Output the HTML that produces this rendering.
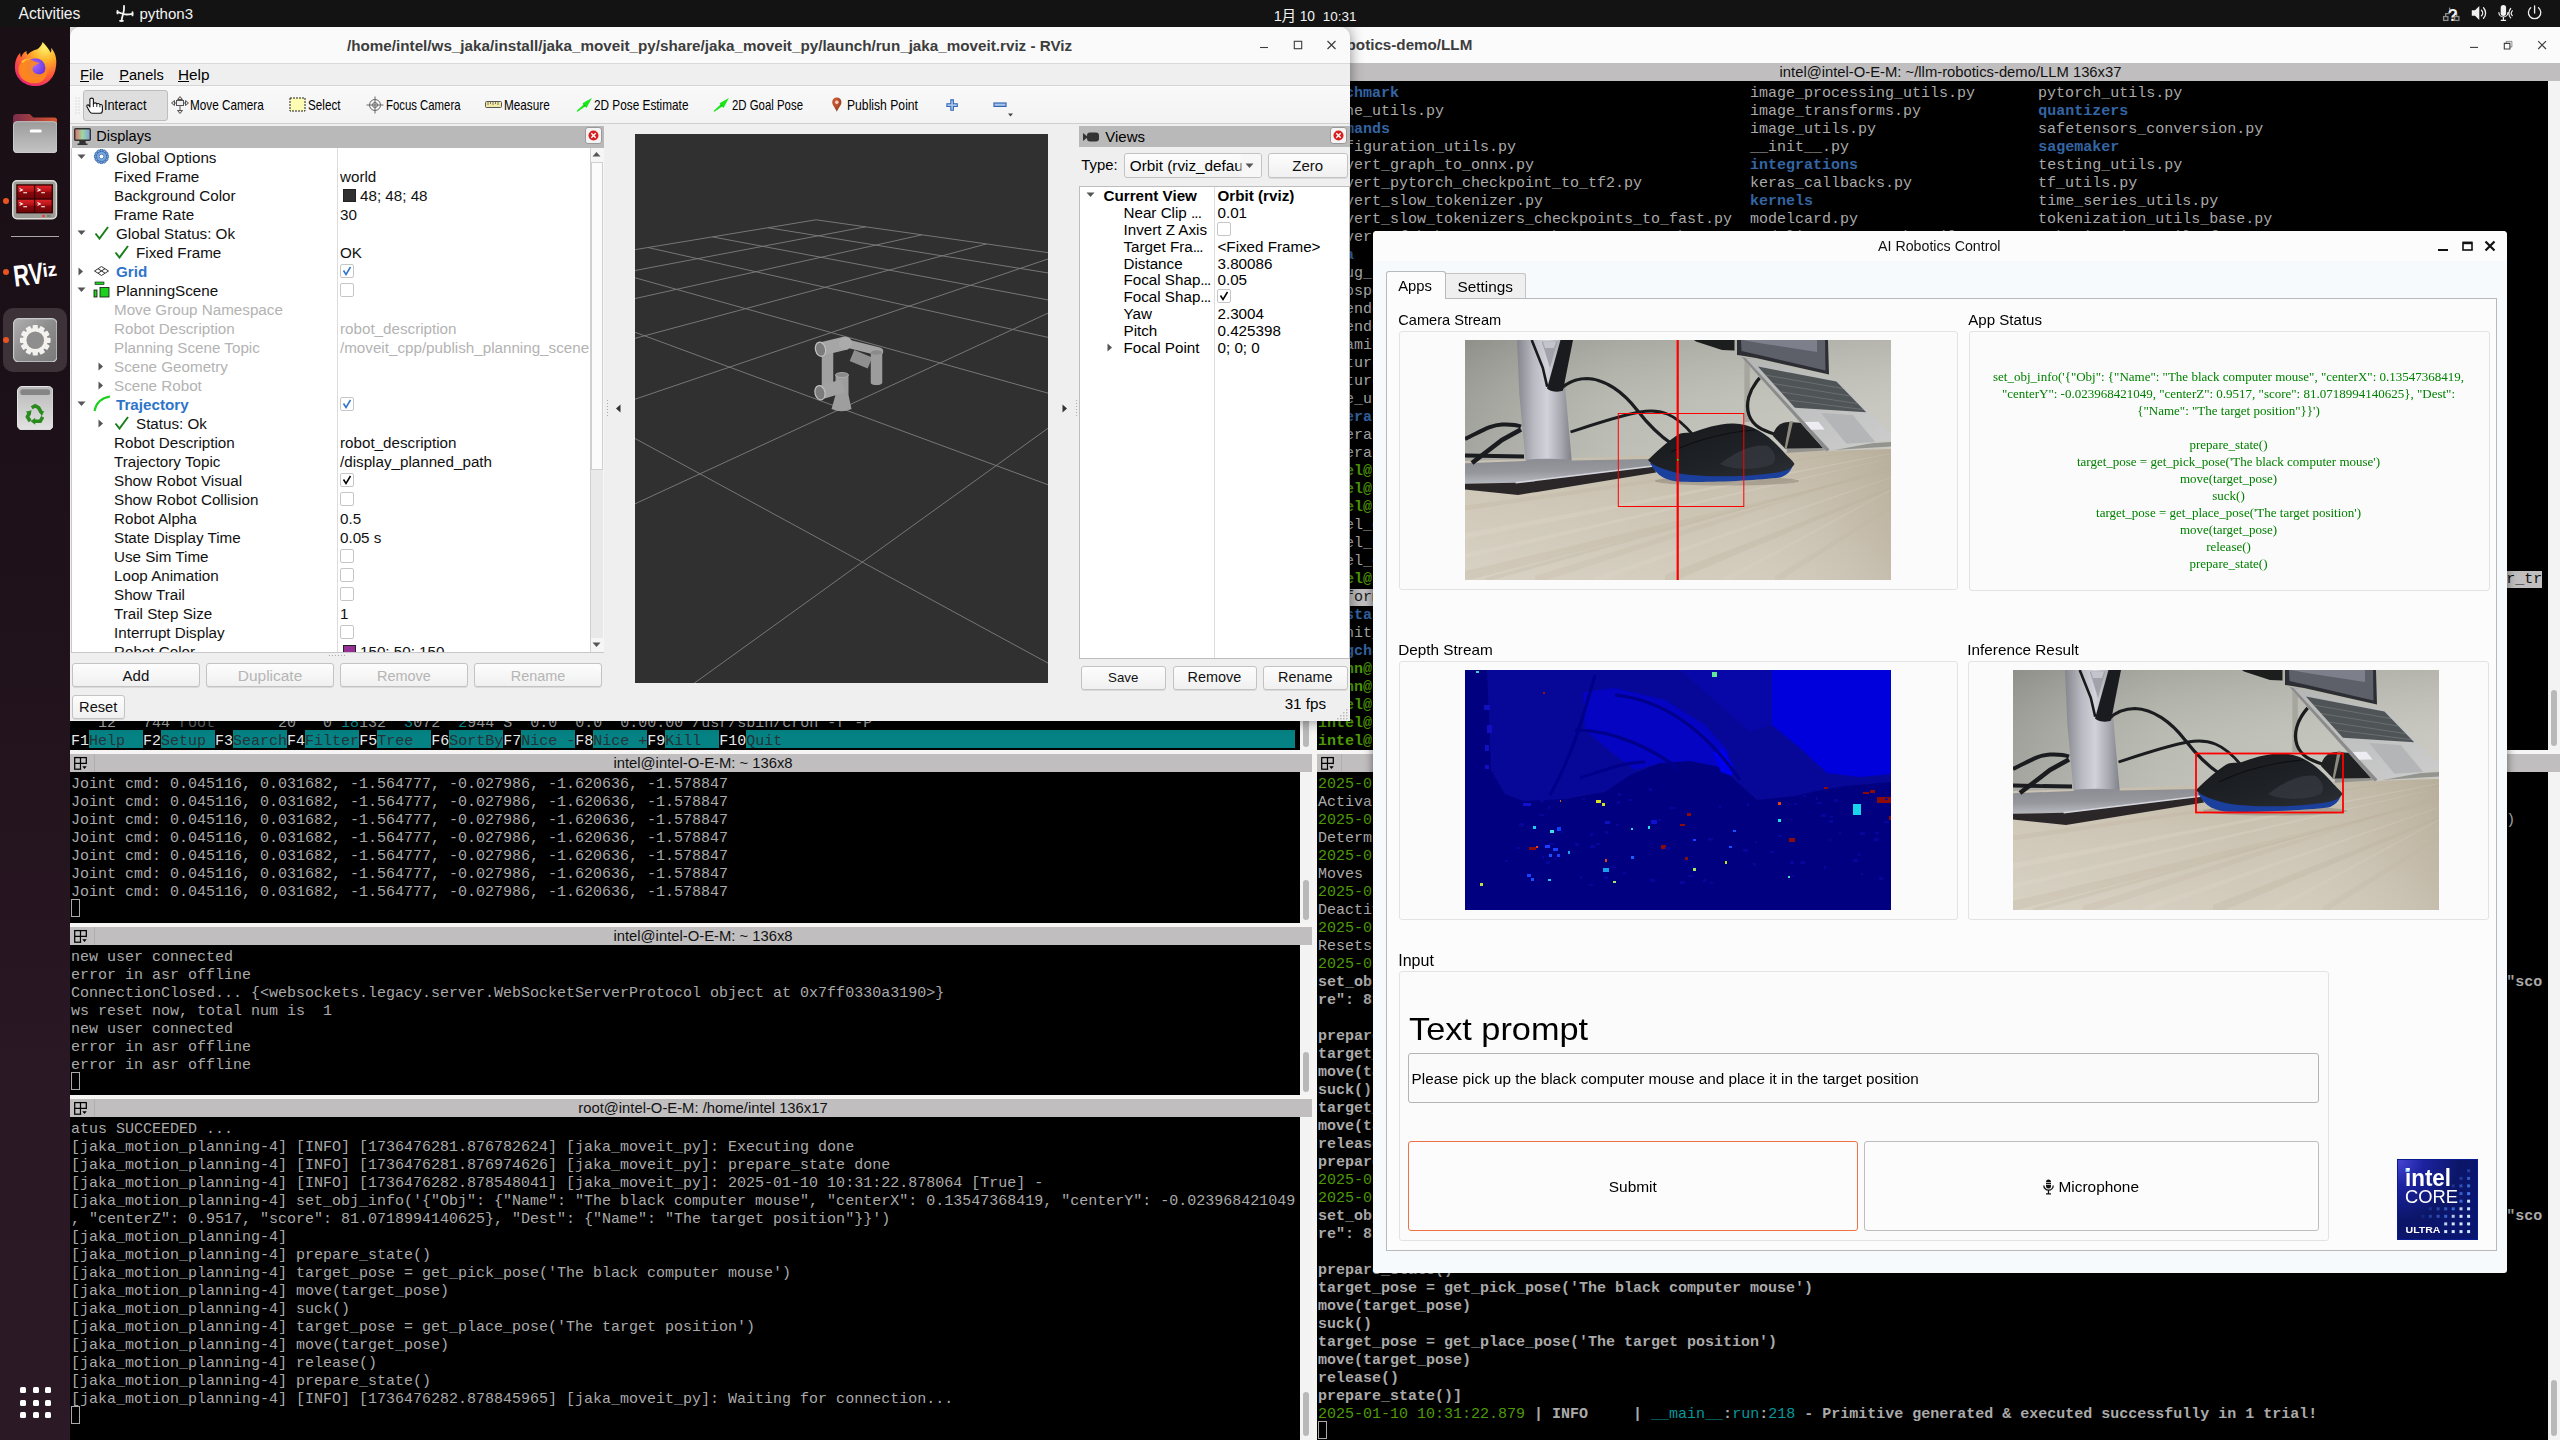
<!DOCTYPE html><html lang="en"><head><meta charset="utf-8"><title>desktop</title><style>

*{box-sizing:border-box;margin:0;padding:0}
html,body{width:2560px;height:1440px;overflow:hidden;background:#000}
body{position:relative;font-family:"Liberation Sans","Noto Sans CJK SC",sans-serif;font-size:15px;color:#000}
.abs{position:absolute}
.t{position:absolute;white-space:pre;line-height:1}
#topbar{position:absolute;left:0;top:0;width:2560px;height:27px;background:#131313;color:#f2f2f2}
#dock{position:absolute;left:0;top:27px;width:70px;height:1413px;background:linear-gradient(180deg,#1b0f16 0%,#1c1018 25%,#22131c 50%,#2a1824 75%,#2b1925 100%)}
.mono{font-family:"Liberation Mono","DejaVu Sans Mono",monospace;font-size:15px;line-height:18px;white-space:pre;color:#aaaaaa;letter-spacing:0px}
.term{position:absolute;background:#000;overflow:hidden}
.term .ln{position:absolute;left:0;height:18px;white-space:pre}
.ptitle{position:absolute;background:#c0bebf;height:18px;font-size:14.8px;color:#111;text-align:center;line-height:18px}
.b{font-weight:bold}

</style></head><body>
<div class="abs" style="left:70px;top:27px;width:2490px;height:1413px;background:#f6f5f4"></div>
<div class="abs" style="left:70px;top:27px;width:2490px;height:36px;background:#fbfbfb"></div>
<span class="t b" style="left:1155px;top:37px;font-size:15.2px;color:#3d3d3d">intel@intel-O-E-M: ~/llm-robotics-demo/LLM</span>
<svg class="abs" style="left:2460px;top:35px" width="96" height="22" viewBox="0 0 96 22"><g fill="none" stroke="#3d3d3d" stroke-width="1.100"><path d="M10 12.400h8"/><path d="M44.300 8.400h5.600v5.600h-5.600z" stroke-width="1.100"/><path d="M46.300 8.400v-2h5.600v5.600h-2" stroke-width="0.800" opacity="0.700"/><path d="M78.200 6.200l7.800 7.800M86 6.200l-7.800 7.800" stroke-width="1.200"/></g></svg>
<div class="ptitle" style="left:70px;top:63px;width:1242px;padding-left:24px">intel@intel-O-E-M: ~ 136x37<svg class="abs" style="left:2px;top:0" width="24" height="18" viewBox="0 0 24 18"><g fill="none" stroke="#000" stroke-width="1.250"><rect x="2.700" y="3.600" width="11.600" height="11.600"/><path d="M8.500 3.600v11.600M2.700 9.400h11.600"/></g><rect x="9.200" y="10.100" width="6" height="6" fill="#c0bebf"/><path d="M10.300 12.300h4.400l-2.200 2.600z" fill="#000"/><path d="M22.500 0v18" stroke="#b0aeaf" stroke-width="1"/></svg></div>
<div class="term mono" style="left:70px;top:81px;width:1230px;height:669px">
<div class="abs" style="left:19px;top:649px;width:54px;height:18px;background:#058384"></div><div class="abs" style="left:91px;top:649px;width:54px;height:18px;background:#058384"></div><div class="abs" style="left:163px;top:649px;width:54px;height:18px;background:#058384"></div><div class="abs" style="left:235px;top:649px;width:54px;height:18px;background:#058384"></div><div class="abs" style="left:307px;top:649px;width:54px;height:18px;background:#058384"></div><div class="abs" style="left:379px;top:649px;width:54px;height:18px;background:#058384"></div><div class="abs" style="left:451px;top:649px;width:54px;height:18px;background:#058384"></div><div class="abs" style="left:523px;top:649px;width:54px;height:18px;background:#058384"></div><div class="abs" style="left:595px;top:649px;width:54px;height:18px;background:#058384"></div><div class="abs" style="left:676px;top:649px;width:549px;height:18px;background:#058384"></div>
<div class="ln" style="top:634px;left:1px">   12   744 <span style="color:#666">root</span>       20   0 <span style="color:#06989a">18</span>132  <span style="color:#06989a">3</span>072  <span style="color:#06989a">2</span>944 S  0.0  0.0  0:00.00 /usr/sbin/cron -f -P</div>
<div class="ln" style="top:652px;left:1px"><span style="color:#e8e8e8">F1</span><span style="color:#26343a">Help  </span><span style="color:#e8e8e8">F2</span><span style="color:#26343a">Setup </span><span style="color:#e8e8e8">F3</span><span style="color:#26343a">Search</span><span style="color:#e8e8e8">F4</span><span style="color:#26343a">Filter</span><span style="color:#e8e8e8">F5</span><span style="color:#26343a">Tree  </span><span style="color:#e8e8e8">F6</span><span style="color:#26343a">SortBy</span><span style="color:#e8e8e8">F7</span><span style="color:#26343a">Nice -</span><span style="color:#e8e8e8">F8</span><span style="color:#26343a">Nice +</span><span style="color:#e8e8e8">F9</span><span style="color:#26343a">Kill  </span><span style="color:#e8e8e8">F10</span><span style="color:#26343a">Quit                                                       </span></div>

</div>
<div class="ptitle" style="left:70px;top:754px;width:1242px;padding-left:24px">intel@intel-O-E-M: ~ 136x8<svg class="abs" style="left:2px;top:0" width="24" height="18" viewBox="0 0 24 18"><g fill="none" stroke="#000" stroke-width="1.250"><rect x="2.700" y="3.600" width="11.600" height="11.600"/><path d="M8.500 3.600v11.600M2.700 9.400h11.600"/></g><rect x="9.200" y="10.100" width="6" height="6" fill="#c0bebf"/><path d="M10.300 12.300h4.400l-2.200 2.600z" fill="#000"/><path d="M22.500 0v18" stroke="#b0aeaf" stroke-width="1"/></svg></div>
<div class="term mono" style="left:70px;top:772px;width:1230px;height:151px">

<div class="ln" style="top:4px;left:1px">Joint cmd: 0.045116, 0.031682, -1.564777, -0.027986, -1.620636, -1.578847</div>
<div class="ln" style="top:22px;left:1px">Joint cmd: 0.045116, 0.031682, -1.564777, -0.027986, -1.620636, -1.578847</div>
<div class="ln" style="top:40px;left:1px">Joint cmd: 0.045116, 0.031682, -1.564777, -0.027986, -1.620636, -1.578847</div>
<div class="ln" style="top:58px;left:1px">Joint cmd: 0.045116, 0.031682, -1.564777, -0.027986, -1.620636, -1.578847</div>
<div class="ln" style="top:76px;left:1px">Joint cmd: 0.045116, 0.031682, -1.564777, -0.027986, -1.620636, -1.578847</div>
<div class="ln" style="top:94px;left:1px">Joint cmd: 0.045116, 0.031682, -1.564777, -0.027986, -1.620636, -1.578847</div>
<div class="ln" style="top:112px;left:1px">Joint cmd: 0.045116, 0.031682, -1.564777, -0.027986, -1.620636, -1.578847</div>
<div class="abs" style="left:1px;top:127px;width:9px;height:18px;border:1px solid #aaaaaa"></div>
</div>
<div class="ptitle" style="left:70px;top:927px;width:1242px;padding-left:24px">intel@intel-O-E-M: ~ 136x8<svg class="abs" style="left:2px;top:0" width="24" height="18" viewBox="0 0 24 18"><g fill="none" stroke="#000" stroke-width="1.250"><rect x="2.700" y="3.600" width="11.600" height="11.600"/><path d="M8.500 3.600v11.600M2.700 9.400h11.600"/></g><rect x="9.200" y="10.100" width="6" height="6" fill="#c0bebf"/><path d="M10.300 12.300h4.400l-2.200 2.600z" fill="#000"/><path d="M22.500 0v18" stroke="#b0aeaf" stroke-width="1"/></svg></div>
<div class="term mono" style="left:70px;top:945px;width:1230px;height:150px">

<div class="ln" style="top:4px;left:1px">new user connected</div>
<div class="ln" style="top:22px;left:1px">error in asr offline</div>
<div class="ln" style="top:40px;left:1px">ConnectionClosed... {&lt;websockets.legacy.server.WebSocketServerProtocol object at 0x7ff0330a3190&gt;}</div>
<div class="ln" style="top:58px;left:1px">ws reset now, total num is  1</div>
<div class="ln" style="top:76px;left:1px">new user connected</div>
<div class="ln" style="top:94px;left:1px">error in asr offline</div>
<div class="ln" style="top:112px;left:1px">error in asr offline</div>
<div class="abs" style="left:1px;top:127px;width:9px;height:18px;border:1px solid #aaaaaa"></div>
</div>
<div class="ptitle" style="left:70px;top:1099px;width:1242px;padding-left:24px">root@intel-O-E-M: /home/intel 136x17<svg class="abs" style="left:2px;top:0" width="24" height="18" viewBox="0 0 24 18"><g fill="none" stroke="#000" stroke-width="1.250"><rect x="2.700" y="3.600" width="11.600" height="11.600"/><path d="M8.500 3.600v11.600M2.700 9.400h11.600"/></g><rect x="9.200" y="10.100" width="6" height="6" fill="#c0bebf"/><path d="M10.300 12.300h4.400l-2.200 2.600z" fill="#000"/><path d="M22.500 0v18" stroke="#b0aeaf" stroke-width="1"/></svg></div>
<div class="term mono" style="left:70px;top:1117px;width:1230px;height:323px">

<div class="ln" style="top:4px;left:1px">atus SUCCEEDED ...</div>
<div class="ln" style="top:22px;left:1px">[jaka_motion_planning-4] [INFO] [1736476281.876782624] [jaka_moveit_py]: Executing done</div>
<div class="ln" style="top:40px;left:1px">[jaka_motion_planning-4] [INFO] [1736476281.876974626] [jaka_moveit_py]: prepare_state done</div>
<div class="ln" style="top:58px;left:1px">[jaka_motion_planning-4] [INFO] [1736476282.878548041] [jaka_moveit_py]: 2025-01-10 10:31:22.878064 [True] -</div>
<div class="ln" style="top:76px;left:1px">[jaka_motion_planning-4] set_obj_info('{"Obj": {"Name": "The black computer mouse", "centerX": 0.13547368419, "centerY": -0.023968421049</div>
<div class="ln" style="top:94px;left:1px">, "centerZ": 0.9517, "score": 81.0718994140625}, "Dest": {"Name": "The target position"}}')</div>
<div class="ln" style="top:112px;left:1px">[jaka_motion_planning-4]</div>
<div class="ln" style="top:130px;left:1px">[jaka_motion_planning-4] prepare_state()</div>
<div class="ln" style="top:148px;left:1px">[jaka_motion_planning-4] target_pose = get_pick_pose('The black computer mouse')</div>
<div class="ln" style="top:166px;left:1px">[jaka_motion_planning-4] move(target_pose)</div>
<div class="ln" style="top:184px;left:1px">[jaka_motion_planning-4] suck()</div>
<div class="ln" style="top:202px;left:1px">[jaka_motion_planning-4] target_pose = get_place_pose('The target position')</div>
<div class="ln" style="top:220px;left:1px">[jaka_motion_planning-4] move(target_pose)</div>
<div class="ln" style="top:238px;left:1px">[jaka_motion_planning-4] release()</div>
<div class="ln" style="top:256px;left:1px">[jaka_motion_planning-4] prepare_state()</div>
<div class="ln" style="top:274px;left:1px">[jaka_motion_planning-4] [INFO] [1736476282.878845965] [jaka_moveit_py]: Waiting for connection...</div>
<div class="abs" style="left:1px;top:289px;width:9px;height:18px;border:1px solid #aaaaaa"></div>
</div>
<div class="abs" style="left:1300px;top:81px;width:12px;height:669px;background:#f3f3f3"></div>
<div class="abs" style="left:1303px;top:700px;width:6px;height:47px;border-radius:3px;background:#b9b9b9"></div>
<div class="abs" style="left:1300px;top:772px;width:12px;height:151px;background:#f3f3f3"></div>
<div class="abs" style="left:1303px;top:880px;width:6px;height:40px;border-radius:3px;background:#b9b9b9"></div>
<div class="abs" style="left:1300px;top:945px;width:12px;height:150px;background:#f3f3f3"></div>
<div class="abs" style="left:1303px;top:1052px;width:6px;height:40px;border-radius:3px;background:#b9b9b9"></div>
<div class="abs" style="left:1300px;top:1117px;width:12px;height:323px;background:#f3f3f3"></div>
<div class="abs" style="left:1303px;top:1392px;width:6px;height:44px;border-radius:3px;background:#b9b9b9"></div>
<div class="ptitle" style="left:1317px;top:63px;width:1243px;padding-left:24px">intel@intel-O-E-M: ~/llm-robotics-demo/LLM 136x37<svg class="abs" style="left:2px;top:0" width="24" height="18" viewBox="0 0 24 18"><g fill="none" stroke="#000" stroke-width="1.250"><rect x="2.700" y="3.600" width="11.600" height="11.600"/><path d="M8.500 3.600v11.600M2.700 9.400h11.600"/></g><rect x="9.200" y="10.100" width="6" height="6" fill="#c0bebf"/><path d="M10.300 12.300h4.400l-2.200 2.600z" fill="#000"/><path d="M22.500 0v18" stroke="#b0aeaf" stroke-width="1"/></svg></div>
<div class="term mono" style="left:1317px;top:81px;width:1231px;height:669px">

<div class="ln" style="top:4px;left:1px"><span style="color:#3465a4;font-weight:bold">benchmark</span>                                       image_processing_utils.py       pytorch_utils.py</div>
<div class="ln" style="top:22px;left:1px">cache_utils.py                                  image_transforms.py             <span style="color:#3465a4;font-weight:bold">quantizers</span></div>
<div class="ln" style="top:40px;left:1px"><span style="color:#3465a4;font-weight:bold">commands</span>                                        image_utils.py                  safetensors_conversion.py</div>
<div class="ln" style="top:58px;left:1px">configuration_utils.py                          __init__.py                     <span style="color:#3465a4;font-weight:bold">sagemaker</span></div>
<div class="ln" style="top:76px;left:1px">convert_graph_to_onnx.py                        <span style="color:#3465a4;font-weight:bold">integrations</span>                    testing_utils.py</div>
<div class="ln" style="top:94px;left:1px">convert_pytorch_checkpoint_to_tf2.py            keras_callbacks.py              tf_utils.py</div>
<div class="ln" style="top:112px;left:1px">convert_slow_tokenizer.py                       <span style="color:#3465a4;font-weight:bold">kernels</span>                         time_series_utils.py</div>
<div class="ln" style="top:130px;left:1px">convert_slow_tokenizers_checkpoints_to_fast.py  modelcard.py                    tokenization_utils_base.py</div>
<div class="ln" style="top:148px;left:1px">convert_tf_hub_seq_to_seq_bert_to_pytorch.py    modeling_attn_mask_utils.py     tokenization_utils_fast.py</div>
<div class="ln" style="top:166px;left:1px"><span style="color:#3465a4;font-weight:bold">data</span></div>
<div class="ln" style="top:184px;left:1px">debug_utils.py</div>
<div class="ln" style="top:202px;left:1px">deepspeed.py</div>
<div class="ln" style="top:220px;left:1px">dependency_versions_check.py</div>
<div class="ln" style="top:238px;left:1px">dependency_versions_table.py</div>
<div class="ln" style="top:256px;left:1px">dynamic_module_utils.py</div>
<div class="ln" style="top:274px;left:1px">feature_extraction_sequence_utils.py</div>
<div class="ln" style="top:292px;left:1px">feature_extraction_utils.py</div>
<div class="ln" style="top:310px;left:1px">file_utils.py</div>
<div class="ln" style="top:328px;left:1px"><span style="color:#3465a4;font-weight:bold">generation</span></div>
<div class="ln" style="top:346px;left:1px">generation_flax_utils.py</div>
<div class="ln" style="top:364px;left:1px">generation_tf_utils.py</div>
<div class="ln" style="top:382px;left:1px"><span style="color:#4e9a06;font-weight:bold">intel@intel-O-E-M</span>:<span style="color:#3465a4;font-weight:bold">~/llm-robotics-demo/LLM</span>$ </div>
<div class="ln" style="top:400px;left:1px"><span style="color:#4e9a06;font-weight:bold">intel@intel-O-E-M</span>:<span style="color:#3465a4;font-weight:bold">~/llm-robotics-demo/LLM</span>$ </div>
<div class="ln" style="top:418px;left:1px"><span style="color:#4e9a06;font-weight:bold">intel@intel-O-E-M</span>:<span style="color:#3465a4;font-weight:bold">~/llm-robotics-demo/LLM</span>$ </div>
<div class="ln" style="top:436px;left:1px">intel_<span style="color:#3465a4;font-weight:bold">extension_for_transformers</span></div>
<div class="ln" style="top:454px;left:1px">intel_<span style="color:#3465a4;font-weight:bold">npu_acceleration_library</span></div>
<div class="ln" style="top:472px;left:1px">intel_<span style="color:#3465a4;font-weight:bold">openvino_notebooks</span></div>
<div class="ln" style="top:490px;left:1px"><span style="color:#4e9a06;font-weight:bold">intel@intel-O-E-M</span>:<span style="color:#3465a4;font-weight:bold">~/llm-robotics-demo/LLM</span>$ ls ../ | grep perf</div>
<div class="ln" style="top:508px;left:1px"><span style="background:#c0bebf;color:#1a1a1a">performance_hint</span></div>
<div class="ln" style="top:526px;left:1px"><span style="color:#3465a4;font-weight:bold">lm-starter-kit</span></div>
<div class="ln" style="top:544px;left:1px">__init__.py</div>
<div class="ln" style="top:562px;left:1px"><span style="color:#3465a4;font-weight:bold">langchain_demo</span></div>
<div class="ln" style="top:580px;left:1px"><span style="color:#4e9a06;font-weight:bold">adlnn@intel-O-E-M</span>:</div>
<div class="ln" style="top:598px;left:1px"><span style="color:#4e9a06;font-weight:bold">adlnn@intel-O-E-M</span>:</div>
<div class="ln" style="top:616px;left:1px"><span style="color:#4e9a06;font-weight:bold">intel@intel-O-E-M</span>:<span style="color:#3465a4;font-weight:bold">~/llm-robotics-demo/LLM</span>$ </div>
<div class="ln" style="top:634px;left:1px"><span style="color:#4e9a06;font-weight:bold">intel@intel-O-E-M</span>:<span style="color:#3465a4;font-weight:bold">~/llm-robotics-demo/LLM</span>$ </div>
<div class="ln" style="top:652px;left:1px"><span style="color:#4e9a06;font-weight:bold">intel@intel-O-E-M</span>:<span style="color:#3465a4;font-weight:bold">~/llm-robotics-demo/LLM</span>$ </div>
<div class="ln" style="top:490px;left:1px">                                                                                                                                    <span style="background:#c0bebf;color:#111">r_tr</span></div>

</div>
<div class="ptitle" style="left:1317px;top:754px;width:1243px;padding-left:24px">intel@intel-O-E-M: ~/llm-robotics-demo/LLM 136x37<svg class="abs" style="left:2px;top:0" width="24" height="18" viewBox="0 0 24 18"><g fill="none" stroke="#000" stroke-width="1.250"><rect x="2.700" y="3.600" width="11.600" height="11.600"/><path d="M8.500 3.600v11.600M2.700 9.400h11.600"/></g><rect x="9.200" y="10.100" width="6" height="6" fill="#c0bebf"/><path d="M10.300 12.300h4.400l-2.200 2.600z" fill="#000"/><path d="M22.500 0v18" stroke="#b0aeaf" stroke-width="1"/></svg></div>
<div class="term mono" style="left:1317px;top:772px;width:1231px;height:668px">

<div class="ln" style="top:4px;left:1px"><span style="color:#4e9a06">2025-01-10 10:31:12.1</span></div>
<div class="ln" style="top:22px;left:1px">Activates the gripper</div>
<div class="ln" style="top:40px;left:1px"><span style="color:#4e9a06">2025-01-10 10:31:14.2</span>                                                                                                               )</div>
<div class="ln" style="top:58px;left:1px">Determines the pose</div>
<div class="ln" style="top:76px;left:1px"><span style="color:#4e9a06">2025-01-10 10:31:16.3</span></div>
<div class="ln" style="top:94px;left:1px">Moves  the arm</div>
<div class="ln" style="top:112px;left:1px"><span style="color:#4e9a06">2025-01-10 10:31:18.4</span></div>
<div class="ln" style="top:130px;left:1px">Deactivates</div>
<div class="ln" style="top:148px;left:1px"><span style="color:#4e9a06">2025-01-10 10:31:19.5</span></div>
<div class="ln" style="top:166px;left:1px">Resets the state</div>
<div class="ln" style="top:184px;left:1px"><span style="color:#4e9a06">2025-01-10 10:31:20.6</span></div>
<div class="ln" style="top:202px;left:1px"><span style="font-weight:bold;color:#aaaaaa">set_obj_info('{"Obj": {"Name": "The black computer mouse"                                                                           "sco</span></div>
<div class="ln" style="top:220px;left:1px"><span style="font-weight:bold;color:#aaaaaa">re": 81.0718994140625}</span></div>
<div class="ln" style="top:256px;left:1px"><span style="font-weight:bold;color:#aaaaaa">prepare_state()</span></div>
<div class="ln" style="top:274px;left:1px"><span style="font-weight:bold;color:#aaaaaa">target_pose</span></div>
<div class="ln" style="top:292px;left:1px"><span style="font-weight:bold;color:#aaaaaa">move(target_pose)</span></div>
<div class="ln" style="top:310px;left:1px"><span style="font-weight:bold;color:#aaaaaa">suck()</span></div>
<div class="ln" style="top:328px;left:1px"><span style="font-weight:bold;color:#aaaaaa">target_pose</span></div>
<div class="ln" style="top:346px;left:1px"><span style="font-weight:bold;color:#aaaaaa">move(target_pose)</span></div>
<div class="ln" style="top:364px;left:1px"><span style="font-weight:bold;color:#aaaaaa">release()</span></div>
<div class="ln" style="top:382px;left:1px"><span style="font-weight:bold;color:#aaaaaa">prepare_state()</span></div>
<div class="ln" style="top:400px;left:1px"><span style="color:#4e9a06">2025-01-10 10:31:21.7</span></div>
<div class="ln" style="top:418px;left:1px"><span style="color:#4e9a06">2025-01-10 10:31:22.8</span></div>
<div class="ln" style="top:436px;left:1px"><span style="font-weight:bold;color:#aaaaaa">set_obj_info('{"Obj": {"Name": "The black computer mouse"                                                                           "sco</span></div>
<div class="ln" style="top:454px;left:1px"><span style="font-weight:bold;color:#aaaaaa">re": 81.0718994140625}</span></div>
<div class="ln" style="top:490px;left:1px"><span style="font-weight:bold;color:#aaaaaa">prepare_state()</span></div>
<div class="ln" style="top:508px;left:1px"><span style="font-weight:bold;color:#aaaaaa">target_pose = get_pick_pose('The black computer mouse')</span></div>
<div class="ln" style="top:526px;left:1px"><span style="font-weight:bold;color:#aaaaaa">move(target_pose)</span></div>
<div class="ln" style="top:544px;left:1px"><span style="font-weight:bold;color:#aaaaaa">suck()</span></div>
<div class="ln" style="top:562px;left:1px"><span style="font-weight:bold;color:#aaaaaa">target_pose = get_place_pose('The target position')</span></div>
<div class="ln" style="top:580px;left:1px"><span style="font-weight:bold;color:#aaaaaa">move(target_pose)</span></div>
<div class="ln" style="top:598px;left:1px"><span style="font-weight:bold;color:#aaaaaa">release()</span></div>
<div class="ln" style="top:616px;left:1px"><span style="font-weight:bold;color:#aaaaaa">prepare_state()]</span></div>
<div class="ln" style="top:634px;left:1px"><span style="color:#4e9a06">2025-01-10 10:31:22.879</span><span style="color:#aaaaaa;font-weight:bold"> | </span><span style="color:#aaaaaa;font-weight:bold">INFO    </span><span style="color:#aaaaaa;font-weight:bold"> | </span><span style="color:#06989a">__main__</span><span style="color:#aaaaaa;font-weight:bold">:</span><span style="color:#06989a">run</span><span style="color:#aaaaaa;font-weight:bold">:</span><span style="color:#06989a">218</span><span style="color:#aaaaaa;font-weight:bold"> - </span><span style="color:#aaaaaa;font-weight:bold">Primitive generated &amp; executed successfully in 1 trial!</span></div>
<div class="abs" style="left:1px;top:649px;width:9px;height:18px;border:1px solid #aaaaaa"></div>
</div>
<div class="abs" style="left:2548px;top:81px;width:12px;height:669px;background:#f3f3f3"></div>
<div class="abs" style="left:2551px;top:690px;width:6px;height:56px;border-radius:3px;background:#b9b9b9"></div>
<div class="abs" style="left:2548px;top:772px;width:12px;height:668px;background:#f3f3f3"></div>
<div class="abs" style="left:2551px;top:1380px;width:6px;height:56px;border-radius:3px;background:#b9b9b9"></div>
<div class="abs" style="left:70px;top:27px;width:1280px;height:694px;background:#efefef;border-radius:10px 10px 0 0;box-shadow:0 0 14px rgba(0,0,0,0.45)"></div>
<div class="abs" style="left:70px;top:27px;width:1280px;height:37px;background:#fafafa;border-radius:10px 10px 0 0;border-bottom:1px solid #d9d9d9"></div>
<span class="t" style="left:347.00px;top:38.32px;font-size:15.22px;font-weight:bold;color:#3d3d3d;">/home/intel/ws_jaka/install/jaka_moveit_py/share/jaka_moveit_py/launch/run_jaka_moveit.rviz - RViz</span>
<svg class="abs" style="left:1250px;top:34px" width="96" height="22" viewBox="0 0 96 22"><g fill="none" stroke="#3d3d3d" stroke-width="1.100"><path d="M10 13.500h8"/><rect x="44.300" y="7.300" width="7.400" height="7.400"/><path d="M77.500 7l8 8M85.500 7l-8 8" stroke-width="1.200"/></g></svg>
<div class="abs" style="left:70px;top:64px;width:1280px;height:22px;background:#efefef;border-bottom:1px solid #d6d6d6"></div>
<span class="t" style="left:80.00px;top:67.52px;font-size:14.74px;"><u>F</u>ile</span>
<span class="t" style="left:119.25px;top:67.68px;font-size:14.55px;"><u>P</u>anels</span>
<span class="t" style="left:178.00px;top:67.03px;font-size:15.32px;"><u>H</u>elp</span>
<div class="abs" style="left:70px;top:86px;width:1280px;height:38px;background:linear-gradient(180deg,#f9f9f9,#f3f3f3);border-bottom:1px solid #cfcfcf"></div>
<svg class="abs" style="left:74.500px;top:96.500px" width="5" height="17" viewBox="0 0 5 17"><g fill="#c4c4c4"><rect x="0.5" y="0.5" width="1" height="1"/><rect x="0.5" y="3.5" width="1" height="1"/><rect x="0.5" y="6.5" width="1" height="1"/><rect x="0.5" y="9.5" width="1" height="1"/><rect x="0.5" y="12.5" width="1" height="1"/><rect x="0.5" y="15.5" width="1" height="1"/><rect x="3.5" y="0.5" width="1" height="1"/><rect x="3.5" y="3.5" width="1" height="1"/><rect x="3.5" y="6.5" width="1" height="1"/><rect x="3.5" y="9.5" width="1" height="1"/><rect x="3.5" y="12.5" width="1" height="1"/><rect x="3.5" y="15.5" width="1" height="1"/></g></svg>
<div class="abs" style="left:83px;top:90px;width:85px;height:31px;border:1px solid #bdbdbd;border-radius:3px;background:#dedede"></div>
<span class="t" style="left:103.75px;top:97.64px;font-size:14.60px;transform:scaleX(0.8729);transform-origin:0 0;">Interact</span>
<span class="t" style="left:190.00px;top:97.64px;font-size:14.60px;transform:scaleX(0.8044);transform-origin:0 0;">Move Camera</span>
<span class="t" style="left:308.00px;top:97.64px;font-size:14.60px;transform:scaleX(0.8010);transform-origin:0 0;">Select</span>
<span class="t" style="left:386.25px;top:97.64px;font-size:14.60px;transform:scaleX(0.7782);transform-origin:0 0;">Focus Camera</span>
<span class="t" style="left:504.25px;top:97.64px;font-size:14.60px;transform:scaleX(0.8055);transform-origin:0 0;">Measure</span>
<span class="t" style="left:594.00px;top:97.64px;font-size:14.60px;transform:scaleX(0.8088);transform-origin:0 0;">2D Pose Estimate</span>
<span class="t" style="left:732.00px;top:97.64px;font-size:14.60px;transform:scaleX(0.7812);transform-origin:0 0;">2D Goal Pose</span>
<span class="t" style="left:847.00px;top:97.64px;font-size:14.60px;transform:scaleX(0.8332);transform-origin:0 0;">Publish Point</span>
<svg class="abs" style="left:85.800px;top:96.800px" width="17" height="17" viewBox="-0.500 -0.500 17 17"><path d="M3.400 9.500V1.700C3.400 0.300 6.900 0.300 6.900 1.700V6.500C6.900 5 10.300 5 10.300 6.800C10.300 5.600 13.400 5.800 13.400 7.500C13.400 6.600 15.900 6.800 15.900 8.500V13C15.900 15 15 15.800 13.500 15.800H5.500C4 15.800 3.300 14.500 2.500 13L0.400 9C-0.300 7.500 1.800 6.800 2.600 8.200z" fill="#fff" stroke="#111" stroke-width="1.100" stroke-linejoin="round"/><path d="M6.900 6.500v3M10.300 7v2.500M13.400 7.800v2" stroke="#111" stroke-width="0.900"/></svg>
<svg class="abs" style="left:171px;top:96px" width="18" height="18" viewBox="0 0 18 18"><g fill="none" stroke="#555" stroke-width="1"><path d="M9 1v16M1 7h16"/><path d="M9 0.500l-2.500 3h5zM9 17.500l-2.500-3h5zM0.500 7l3-2.500v5zM17.500 7l-3-2.500v5z" fill="#ddd"/><rect x="5.500" y="4.500" width="7" height="5" fill="#eee"/></g></svg>
<svg class="abs" style="left:289px;top:97px" width="17" height="15" viewBox="0 0 17 15"><rect x="1" y="1" width="15" height="13" fill="#fdfbb4" stroke="#222" stroke-width="1" stroke-dasharray="2 1"/></svg>
<svg class="abs" style="left:366px;top:96px" width="18" height="18" viewBox="0 0 18 18"><g fill="none" stroke="#666" stroke-width="1"><circle cx="9" cy="9" r="5.500"/><circle cx="9" cy="9" r="2.500"/><path d="M9 0.500v17M0.500 9h17"/></g></svg>
<svg class="abs" style="left:485px;top:101px" width="17" height="8" viewBox="0 0 17 8"><rect x="0.500" y="0.500" width="16" height="6" rx="1" fill="#f3e9a6" stroke="#555"/><path d="M3 1v3M5.500 1v2M8 1v3M10.500 1v2M13 1v3" stroke="#555" stroke-width="0.800"/></svg>
<svg class="abs" style="left:576px;top:97px" width="17" height="16" viewBox="0 0 17 16"><path d="M0.500 13.900L7.600 7.600L6.500 6.300L15.900 1.100L10.500 10.900L9.200 9.400L1.500 14.800z" fill="#1ae61a"/><path d="M7.600 7.600L9.200 9.400" stroke="#0a9a0a" stroke-width="0.800"/></svg>
<svg class="abs" style="left:712.85px;top:97px" width="17" height="16" viewBox="0 0 17 16"><path d="M0.500 13.900L7.600 7.600L6.500 6.300L15.900 1.100L10.500 10.900L9.200 9.400L1.500 14.800z" fill="#1ae61a"/><path d="M7.600 7.600L9.200 9.400" stroke="#0a9a0a" stroke-width="0.800"/></svg>
<svg class="abs" style="left:831px;top:96.800px" width="11.700" height="15.700" viewBox="0 0 14 18" preserveAspectRatio="none"><defs><radialGradient id="pp" cx="0.4" cy="0.3" r="0.8"><stop offset="0" stop-color="#e0623f"/><stop offset="1" stop-color="#7a3514"/></radialGradient></defs><path d="M7 17C5 12 1.500 9.500 1.500 6A5.500 5.500 0 0 1 12.500 6C12.500 9.500 9 12 7 17z" fill="url(#pp)"/><circle cx="7" cy="6" r="2" fill="#f6d5c8"/></svg>
<svg class="abs" style="left:945.800px;top:99px" width="12.200" height="12.200" viewBox="0 0 14 14"><path d="M5.500 1h3v4.500h4.500v3h-4.500v4.500h-3v-4.500h-4.500v-3h4.500z" fill="#a9c5ee" stroke="#3566b4" stroke-width="1.200"/></svg>
<svg class="abs" style="left:993px;top:102px" width="22" height="16" viewBox="0 0 22 16"><rect x="1" y="1" width="12" height="3.400" fill="#a9c5ee" stroke="#3566b4" stroke-width="1.200"/><path d="M15 11.500h5l-2.500 3z" fill="#444"/></svg>
<div class="abs" style="left:72px;top:126px;width:532px;height:22px;background:#b9b9b9"></div>
<svg class="abs" style="left:74px;top:128px" width="17" height="18" viewBox="0 0 17 18"><defs><linearGradient id="mon" x1="0" x2="1"><stop offset="0" stop-color="#e06b6b"/><stop offset="0.500" stop-color="#9fd89f"/><stop offset="1" stop-color="#7d9fe0"/></linearGradient></defs><rect x="0.700" y="0.700" width="15.600" height="11.600" rx="1" fill="url(#mon)" stroke="#333" stroke-width="1.400"/><path d="M6 13h5v2.500H6zM3.500 16.300h10" stroke="#333" stroke-width="1.400" fill="#333"/></svg>
<span class="t" style="left:96.25px;top:129.43px;font-size:14.56px;">Displays</span>
<div class="abs" style="left:585px;top:127px;width:17px;height:17px;border:1px solid #999;border-radius:3px;background:#f4f4f4"></div>
<svg class="abs" style="left:588px;top:130px" width="11" height="11" viewBox="0 0 11 11"><circle cx="5.500" cy="5.500" r="5" fill="#d81e1e"/><path d="M3.300 3.300l4.400 4.400M7.700 3.300l-4.400 4.400" stroke="#fff" stroke-width="1.400"/></svg>
<div class="abs" style="left:71px;top:148px;width:533px;height:505px;background:#fff;border:1px solid #c8c8c8;border-top:none"></div>
<div class="abs" style="left:337px;top:148px;width:1px;height:504px;background:#dcdcdc"></div>
<div class="abs" style="left:590px;top:148px;width:14px;height:504px;background:#f6f6f6;border-left:1px solid #d0d0d0"></div>
<div class="abs" style="left:591px;top:162px;width:12px;height:308px;background:#fbfbfb;border:1px solid #cfcfcf"></div>
<div class="abs" style="left:591px;top:470px;width:12px;height:168px;background:#e9e9e9"></div>
<svg class="abs" style="left:592px;top:151px" width="9" height="6" viewBox="0 0 9 6"><path d="M0.500 5.500h8l-4-4.500z" fill="#555"/></svg>
<svg class="abs" style="left:592px;top:642px" width="9" height="6" viewBox="0 0 9 6"><path d="M0.500 0.500h8l-4 4.500z" fill="#555"/></svg>
<div class="abs" style="left:72px;top:148px;width:518px;height:504px;overflow:hidden">
<span class="t" style="left:44.00px;top:2.13px;font-size:15.20px;color:#111;">Global Options</span>
<svg class="abs" style="left:5px;top:6px" width="9" height="6" viewBox="0 0 9 6"><path d="M0.500 0.500h8l-4 4.500z" fill="#555"/></svg>
<svg class="abs" style="left:22px;top:1px" width="15" height="15" viewBox="0 0 15 15"><g transform="translate(7.500 7.500)"><g fill="#7ba7e0" stroke="#3465a4" stroke-width="0.700"><rect x="-1.300" y="-7" width="2.600" height="14" transform="rotate(0)"/><rect x="-1.300" y="-7" width="2.600" height="14" transform="rotate(30)"/><rect x="-1.300" y="-7" width="2.600" height="14" transform="rotate(60)"/><rect x="-1.300" y="-7" width="2.600" height="14" transform="rotate(90)"/><rect x="-1.300" y="-7" width="2.600" height="14" transform="rotate(120)"/><rect x="-1.300" y="-7" width="2.600" height="14" transform="rotate(150)"/><circle r="5"/></g><circle r="2.300" fill="#fff" stroke="#3465a4" stroke-width="0.700"/></g></svg>
<span class="t" style="left:42.00px;top:21.13px;font-size:15.20px;color:#111;">Fixed Frame</span>
<span class="t" style="left:268.00px;top:21.13px;font-size:15.20px;color:#111;">world</span>
<span class="t" style="left:42.00px;top:40.13px;font-size:15.20px;color:#111;">Background Color</span>
<div class="abs" style="left:271px;top:41px;width:13px;height:13px;background:#303030;border:1px solid #222"></div>
<span class="t" style="left:288.00px;top:40.13px;font-size:15.20px;color:#111;">48; 48; 48</span>
<span class="t" style="left:42.00px;top:59.13px;font-size:15.20px;color:#111;">Frame Rate</span>
<span class="t" style="left:268.00px;top:59.13px;font-size:15.20px;color:#111;">30</span>
<span class="t" style="left:44.00px;top:78.13px;font-size:15.20px;color:#111;">Global Status: Ok</span>
<svg class="abs" style="left:5px;top:82px" width="9" height="6" viewBox="0 0 9 6"><path d="M0.500 0.500h8l-4 4.500z" fill="#555"/></svg>
<svg class="abs" style="left:22px;top:78px" width="16" height="14" viewBox="0 0 16 14"><path d="M1.500 7.500l4 5 8.500-11.500" fill="none" stroke="#1a7f1a" stroke-width="2"/></svg>
<span class="t" style="left:64.00px;top:97.13px;font-size:15.20px;color:#111;">Fixed Frame</span>
<span class="t" style="left:268.00px;top:97.13px;font-size:15.20px;color:#111;">OK</span>
<svg class="abs" style="left:42px;top:97px" width="16" height="14" viewBox="0 0 16 14"><path d="M1.500 7.500l4 5 8.500-11.500" fill="none" stroke="#1a7f1a" stroke-width="2"/></svg>
<span class="t" style="left:44.00px;top:116.13px;font-size:15.20px;font-weight:bold;color:#2e74c9;">Grid</span>
<svg class="abs" style="left:268px;top:116px" width="14" height="14" viewBox="0 0 14 14"><rect x="0.500" y="0.500" width="13" height="13" rx="1.500" fill="#fff" stroke="#c6c6c6"/><path d="M3.500 6.500l2.500 4 4.500-7.500" fill="none" stroke="#2e74c9" stroke-width="1.500"/></svg>
<svg class="abs" style="left:6px;top:119px" width="6" height="9" viewBox="0 0 6 9"><path d="M0.500 0.500v8l4.500-4z" fill="#555"/></svg>
<svg class="abs" style="left:22px;top:118px" width="15" height="10" viewBox="0 0 15 10"><g fill="none" stroke="#333" stroke-width="1"><path d="M7.500 0.500l7 4.500-7 4.500-7-4.500zM4 2.700l7 4.500M11 2.700l-7 4.500"/></g></svg>
<span class="t" style="left:44.00px;top:135.13px;font-size:15.20px;color:#111;">PlanningScene</span>
<svg class="abs" style="left:268px;top:135px" width="14" height="14" viewBox="0 0 14 14"><rect x="0.500" y="0.500" width="13" height="13" rx="1.500" fill="#fff" stroke="#c6c6c6"/></svg>
<svg class="abs" style="left:5px;top:139px" width="9" height="6" viewBox="0 0 9 6"><path d="M0.500 0.500h8l-4 4.500z" fill="#555"/></svg>
<svg class="abs" style="left:21px;top:133px" width="17" height="17" viewBox="0 0 17 17"><rect x="2" y="1" width="9" height="2.500" fill="#1ed11e" stroke="#111" stroke-width="0.600"/><rect x="1" y="9" width="3" height="7" fill="#1ed11e" stroke="#111" stroke-width="0.800"/><rect x="7" y="6.500" width="9" height="9.500" fill="#1ed11e" stroke="#111" stroke-width="0.800"/></svg>
<span class="t" style="left:42.00px;top:154.13px;font-size:15.20px;color:#b3b3b3;">Move Group Namespace</span>
<span class="t" style="left:42.00px;top:173.13px;font-size:15.20px;color:#b3b3b3;">Robot Description</span>
<span class="t" style="left:268.00px;top:173.13px;font-size:15.20px;color:#b3b3b3;">robot_description</span>
<span class="t" style="left:42.00px;top:192.13px;font-size:15.20px;color:#b3b3b3;">Planning Scene Topic</span>
<span class="t" style="left:268.00px;top:192.13px;font-size:15.20px;color:#b3b3b3;">/moveit_cpp/publish_planning_scene</span>
<span class="t" style="left:42.00px;top:211.13px;font-size:15.20px;color:#b3b3b3;">Scene Geometry</span>
<svg class="abs" style="left:26px;top:214px" width="6" height="9" viewBox="0 0 6 9"><path d="M0.500 0.500v8l4.500-4z" fill="#555"/></svg>
<span class="t" style="left:42.00px;top:230.13px;font-size:15.20px;color:#b3b3b3;">Scene Robot</span>
<svg class="abs" style="left:26px;top:233px" width="6" height="9" viewBox="0 0 6 9"><path d="M0.500 0.500v8l4.500-4z" fill="#555"/></svg>
<span class="t" style="left:44.00px;top:249.13px;font-size:15.20px;font-weight:bold;color:#2e74c9;">Trajectory</span>
<svg class="abs" style="left:268px;top:249px" width="14" height="14" viewBox="0 0 14 14"><rect x="0.500" y="0.500" width="13" height="13" rx="1.500" fill="#fff" stroke="#c6c6c6"/><path d="M3.500 6.500l2.500 4 4.500-7.500" fill="none" stroke="#2e74c9" stroke-width="1.500"/></svg>
<svg class="abs" style="left:5px;top:253px" width="9" height="6" viewBox="0 0 9 6"><path d="M0.500 0.500h8l-4 4.500z" fill="#555"/></svg>
<svg class="abs" style="left:21px;top:247px" width="18" height="17" viewBox="0 0 18 17"><path d="M1.500 16C3 8 8 3 17 1.500" fill="none" stroke="#1ed11e" stroke-width="2.200"/></svg>
<span class="t" style="left:64.00px;top:268.13px;font-size:15.20px;color:#111;">Status: Ok</span>
<svg class="abs" style="left:26px;top:271px" width="6" height="9" viewBox="0 0 6 9"><path d="M0.500 0.500v8l4.500-4z" fill="#555"/></svg>
<svg class="abs" style="left:42px;top:268px" width="16" height="14" viewBox="0 0 16 14"><path d="M1.500 7.500l4 5 8.500-11.500" fill="none" stroke="#1a7f1a" stroke-width="2"/></svg>
<span class="t" style="left:42.00px;top:287.13px;font-size:15.20px;color:#111;">Robot Description</span>
<span class="t" style="left:268.00px;top:287.13px;font-size:15.20px;color:#111;">robot_description</span>
<span class="t" style="left:42.00px;top:306.13px;font-size:15.20px;color:#111;">Trajectory Topic</span>
<span class="t" style="left:268.00px;top:306.13px;font-size:15.20px;color:#111;">/display_planned_path</span>
<span class="t" style="left:42.00px;top:325.13px;font-size:15.20px;color:#111;">Show Robot Visual</span>
<svg class="abs" style="left:268px;top:325px" width="14" height="14" viewBox="0 0 14 14"><rect x="0.500" y="0.500" width="13" height="13" rx="1.500" fill="#fff" stroke="#c6c6c6"/><path d="M3.500 6.500l2.500 4 4.500-7.500" fill="none" stroke="#000" stroke-width="1.500"/></svg>
<span class="t" style="left:42.00px;top:344.13px;font-size:15.20px;color:#111;">Show Robot Collision</span>
<svg class="abs" style="left:268px;top:344px" width="14" height="14" viewBox="0 0 14 14"><rect x="0.500" y="0.500" width="13" height="13" rx="1.500" fill="#fff" stroke="#c6c6c6"/></svg>
<span class="t" style="left:42.00px;top:363.13px;font-size:15.20px;color:#111;">Robot Alpha</span>
<span class="t" style="left:268.00px;top:363.13px;font-size:15.20px;color:#111;">0.5</span>
<span class="t" style="left:42.00px;top:382.13px;font-size:15.20px;color:#111;">State Display Time</span>
<span class="t" style="left:268.00px;top:382.13px;font-size:15.20px;color:#111;">0.05 s</span>
<span class="t" style="left:42.00px;top:401.13px;font-size:15.20px;color:#111;">Use Sim Time</span>
<svg class="abs" style="left:268px;top:401px" width="14" height="14" viewBox="0 0 14 14"><rect x="0.500" y="0.500" width="13" height="13" rx="1.500" fill="#fff" stroke="#c6c6c6"/></svg>
<span class="t" style="left:42.00px;top:420.13px;font-size:15.20px;color:#111;">Loop Animation</span>
<svg class="abs" style="left:268px;top:420px" width="14" height="14" viewBox="0 0 14 14"><rect x="0.500" y="0.500" width="13" height="13" rx="1.500" fill="#fff" stroke="#c6c6c6"/></svg>
<span class="t" style="left:42.00px;top:439.13px;font-size:15.20px;color:#111;">Show Trail</span>
<svg class="abs" style="left:268px;top:439px" width="14" height="14" viewBox="0 0 14 14"><rect x="0.500" y="0.500" width="13" height="13" rx="1.500" fill="#fff" stroke="#c6c6c6"/></svg>
<span class="t" style="left:42.00px;top:458.13px;font-size:15.20px;color:#111;">Trail Step Size</span>
<span class="t" style="left:268.00px;top:458.13px;font-size:15.20px;color:#111;">1</span>
<span class="t" style="left:42.00px;top:477.13px;font-size:15.20px;color:#111;">Interrupt Display</span>
<svg class="abs" style="left:268px;top:477px" width="14" height="14" viewBox="0 0 14 14"><rect x="0.500" y="0.500" width="13" height="13" rx="1.500" fill="#fff" stroke="#c6c6c6"/></svg>
<span class="t" style="left:42.00px;top:496.13px;font-size:15.20px;color:#111;">Robot Color</span>
<div class="abs" style="left:271px;top:497px;width:13px;height:13px;background:#962f96;border:1px solid #222"></div>
<span class="t" style="left:288.00px;top:496.13px;font-size:15.20px;color:#111;">150; 50; 150</span>
</div>
<div class="abs" style="left:329px;top:655px;width:18px;height:1px;background-image:linear-gradient(90deg,#aaa 1px,transparent 1px);background-size:3px 1px"></div>
<div class="abs" style="left:72px;top:663px;width:128px;height:24px;border:1px solid #c3c3c3;border-radius:3px;background:linear-gradient(180deg,#fdfdfd,#f0f0f0);box-shadow:0 1px 0 #dadada"></div><span class="t" style="left:122.62px;top:668.02px;font-size:15.03px;color:#111;">Add</span>
<div class="abs" style="left:206px;top:663px;width:128px;height:24px;border:1px solid #c3c3c3;border-radius:3px;background:linear-gradient(180deg,#fdfdfd,#f0f0f0);box-shadow:0 1px 0 #dadada"></div><span class="t" style="left:237.75px;top:667.65px;font-size:15.47px;color:#b5b5b5;">Duplicate</span>
<div class="abs" style="left:340px;top:663px;width:128px;height:24px;border:1px solid #c3c3c3;border-radius:3px;background:linear-gradient(180deg,#fdfdfd,#f0f0f0);box-shadow:0 1px 0 #dadada"></div><span class="t" style="left:377.12px;top:668.53px;font-size:14.44px;color:#b5b5b5;">Remove</span>
<div class="abs" style="left:474px;top:663px;width:128px;height:24px;border:1px solid #c3c3c3;border-radius:3px;background:linear-gradient(180deg,#fdfdfd,#f0f0f0);box-shadow:0 1px 0 #dadada"></div><span class="t" style="left:510.75px;top:668.54px;font-size:14.42px;color:#b5b5b5;">Rename</span>
<div class="abs" style="left:72px;top:695px;width:52.5px;height:23.5px;border:1px solid #c3c3c3;border-radius:3px;background:linear-gradient(180deg,#fdfdfd,#f0f0f0);box-shadow:0 1px 0 #dadada"></div><span class="t" style="left:79.12px;top:700.10px;font-size:14.64px;color:#111;">Reset</span>
<svg class="abs" style="left:615px;top:404px" width="6" height="9" viewBox="0 0 6 9"><path d="M5.500 0.500v8l-4.500-4z" fill="#333"/></svg>
<svg class="abs" style="left:1062px;top:404px" width="6" height="9" viewBox="0 0 6 9"><path d="M0.500 0.500v8l4.500-4z" fill="#333"/></svg>
<div class="abs" style="left:607px;top:400px;width:1px;height:18px;background-image:linear-gradient(180deg,#aaa 1px,transparent 1px);background-size:1px 3px"></div>
<div class="abs" style="left:1076px;top:400px;width:1px;height:18px;background-image:linear-gradient(180deg,#aaa 1px,transparent 1px);background-size:1px 3px"></div>
<div class="abs" style="left:1079px;top:126px;width:271px;height:21px;background:#b9b9b9"></div>
<svg class="abs" style="left:1082px;top:131px" width="18" height="12" viewBox="0 0 18 12"><path d="M1 2l5 4-5 4z" fill="#333"/><rect x="5" y="1.500" width="12" height="9" rx="3" fill="#333"/></svg>
<span class="t" style="left:1105.30px;top:129.02px;font-size:14.98px;">Views</span>
<div class="abs" style="left:1330px;top:127px;width:17px;height:17px;border:1px solid #999;border-radius:3px;background:#f4f4f4"></div>
<svg class="abs" style="left:1333px;top:130px" width="11" height="11" viewBox="0 0 11 11"><circle cx="5.500" cy="5.500" r="5" fill="#d81e1e"/><path d="M3.300 3.300l4.400 4.400M7.700 3.300l-4.400 4.400" stroke="#fff" stroke-width="1.400"/></svg>
<span class="t" style="left:1081.30px;top:157.77px;font-size:14.80px;">Type:</span>
<div class="abs" style="left:1124px;top:153px;width:138px;height:25px;border:1px solid #c3c3c3;border-radius:3px;background:linear-gradient(180deg,#fdfdfd,#f1f1f1);overflow:hidden"><span class="t" style="left:4.800px;top:4.300px;font-size:15.300px">Orbit (rviz_defau</span><div class="abs" style="left:113px;top:0;width:25px;height:24px;background:linear-gradient(90deg,rgba(247,247,247,0),#f7f7f7 22%)"></div></div>
<svg class="abs" style="left:1245px;top:163px" width="9" height="6" viewBox="0 0 9 6"><path d="M0.500 0.500h8l-4 4.500z" fill="#555"/></svg>
<div class="abs" style="left:1268px;top:153px;width:79.5px;height:24.5px;border:1px solid #c3c3c3;border-radius:3px;background:linear-gradient(180deg,#fdfdfd,#f0f0f0);box-shadow:0 1px 0 #dadada"></div><span class="t" style="left:1292.35px;top:157.62px;font-size:14.98px;color:#111;">Zero</span>
<div class="abs" style="left:1079px;top:186px;width:271px;height:473px;background:#fff;border:1px solid #bdbdbd"></div>
<div class="abs" style="left:1214px;top:187px;width:1px;height:471px;background:#dcdcdc"></div>
<span class="t" style="left:1103.50px;top:187.93px;font-size:15.20px;font-weight:bold;">Current View</span>
<span class="t" style="left:1217.50px;top:187.93px;font-size:15.20px;font-weight:bold;">Orbit (rviz)</span>
<svg class="abs" style="left:1086px;top:192.0px" width="9" height="6" viewBox="0 0 9 6"><path d="M0.500 0.500h8l-4 4.500z" fill="#555"/></svg>
<span class="t" style="left:1123.50px;top:204.83px;font-size:15.20px;">Near Clip <span style="letter-spacing:-0.9px">...</span></span>
<span class="t" style="left:1217.50px;top:204.83px;font-size:15.20px;">0.01</span>
<span class="t" style="left:1123.50px;top:221.73px;font-size:15.20px;">Invert Z Axis</span>
<svg class="abs" style="left:1217px;top:221.8px" width="14" height="14" viewBox="0 0 14 14"><rect x="0.500" y="0.500" width="13" height="13" rx="1.500" fill="#fff" stroke="#c6c6c6"/></svg>
<span class="t" style="left:1123.50px;top:238.63px;font-size:15.20px;">Target Fra<span style="letter-spacing:-0.9px">...</span></span>
<span class="t" style="left:1217.50px;top:238.63px;font-size:15.20px;">&lt;Fixed Frame&gt;</span>
<span class="t" style="left:1123.50px;top:255.53px;font-size:15.20px;">Distance</span>
<span class="t" style="left:1217.50px;top:255.53px;font-size:15.20px;">3.80086</span>
<span class="t" style="left:1123.50px;top:272.43px;font-size:15.20px;">Focal Shap<span style="letter-spacing:-0.9px">...</span></span>
<span class="t" style="left:1217.50px;top:272.43px;font-size:15.20px;">0.05</span>
<span class="t" style="left:1123.50px;top:289.33px;font-size:15.20px;">Focal Shap<span style="letter-spacing:-0.9px">...</span></span>
<svg class="abs" style="left:1217px;top:289.4px" width="14" height="14" viewBox="0 0 14 14"><rect x="0.500" y="0.500" width="13" height="13" rx="1.500" fill="#fff" stroke="#c6c6c6"/><path d="M3.500 6.500l2.500 4 4.500-7.500" fill="none" stroke="#000" stroke-width="1.500"/></svg>
<span class="t" style="left:1123.50px;top:306.23px;font-size:15.20px;">Yaw</span>
<span class="t" style="left:1217.50px;top:306.23px;font-size:15.20px;">2.3004</span>
<span class="t" style="left:1123.50px;top:323.13px;font-size:15.20px;">Pitch</span>
<span class="t" style="left:1217.50px;top:323.13px;font-size:15.20px;">0.425398</span>
<span class="t" style="left:1123.50px;top:340.03px;font-size:15.20px;">Focal Point</span>
<span class="t" style="left:1217.50px;top:340.03px;font-size:15.20px;">0; 0; 0</span>
<svg class="abs" style="left:1107px;top:343.1px" width="6" height="9" viewBox="0 0 6 9"><path d="M0.500 0.500v8l4.500-4z" fill="#555"/></svg>
<div class="abs" style="left:1081px;top:665.5px;width:84.5px;height:24px;border:1px solid #c3c3c3;border-radius:3px;background:linear-gradient(180deg,#fdfdfd,#f0f0f0);box-shadow:0 1px 0 #dadada"></div><span class="t" style="left:1108.12px;top:671.27px;font-size:13.27px;color:#111;">Save</span>
<div class="abs" style="left:1172.5px;top:665.5px;width:84px;height:24px;border:1px solid #c3c3c3;border-radius:3px;background:linear-gradient(180deg,#fdfdfd,#f0f0f0);box-shadow:0 1px 0 #dadada"></div><span class="t" style="left:1187.62px;top:670.28px;font-size:14.44px;color:#111;">Remove</span>
<div class="abs" style="left:1263px;top:665.5px;width:84.5px;height:24px;border:1px solid #c3c3c3;border-radius:3px;background:linear-gradient(180deg,#fdfdfd,#f0f0f0);box-shadow:0 1px 0 #dadada"></div><span class="t" style="left:1278.00px;top:670.29px;font-size:14.42px;color:#111;">Rename</span>
<span class="t" style="left:1284.70px;top:695.92px;font-size:15.16px;">31 fps</span>
<svg class="abs" style="left:1337px;top:708px" width="12" height="12" viewBox="0 0 12 12"><g fill="#bbb"><rect x="9" y="1" width="1.500" height="1.500"/><rect x="6" y="4" width="1.500" height="1.500"/><rect x="9" y="4" width="1.500" height="1.500"/><rect x="3" y="7" width="1.500" height="1.500"/><rect x="6" y="7" width="1.500" height="1.500"/><rect x="9" y="7" width="1.500" height="1.500"/><rect x="0" y="10" width="1.500" height="1.500"/><rect x="3" y="10" width="1.500" height="1.500"/><rect x="6" y="10" width="1.500" height="1.500"/><rect x="9" y="10" width="1.500" height="1.500"/></g></svg>
<svg class="abs" style="left:635px;top:134px;background:#303030" width="413" height="549" viewBox="0 0 413 549">
<g stroke="#8c8c8c" stroke-width="0.9" opacity="0.85">
<line x1="463.0" y1="125.7" x2="181.0" y2="85.8"/>
<line x1="463.0" y1="147.0" x2="132.9" y2="93.7"/>
<line x1="463.0" y1="175.3" x2="77.5" y2="102.9"/>
<line x1="463.0" y1="214.6" x2="12.9" y2="113.5"/>
<line x1="463.0" y1="258.2" x2="-9.9" y2="599.0"/>
<line x1="463.0" y1="273.1" x2="-50.0" y2="129.8"/>
<line x1="463.0" y1="156.1" x2="-50.0" y2="392.9"/>
<line x1="463.0" y1="369.2" x2="-50.0" y2="179.8"/>
<line x1="426.2" y1="120.5" x2="-50.0" y2="282.2"/>
<line x1="463.0" y1="556.3" x2="-50.0" y2="277.3"/>
<line x1="351.6" y1="109.9" x2="-50.0" y2="217.8"/>
<line x1="-2.7" y1="599.0" x2="-50.0" y2="550.1"/>
<line x1="287.1" y1="100.8" x2="-50.0" y2="175.7"/>
<line x1="230.7" y1="92.8" x2="-50.0" y2="146.0"/>
<line x1="181.0" y1="85.8" x2="-50.0" y2="123.9"/>
</g>
<g>
<line x1="217.0" y1="221.5" x2="235.0" y2="229.0" stroke="#8f8f8f" stroke-width="12" stroke-linecap="butt"/>
<line x1="210.0" y1="209.0" x2="244.0" y2="217.5" stroke="#a3a3a3" stroke-width="8.5" stroke-linecap="round"/>
<line x1="241.5" y1="220.0" x2="241.5" y2="249.0" stroke="#9c9c9c" stroke-width="11.5" stroke-linecap="butt"/>
<ellipse cx="241.5" cy="218.5" rx="5.700" ry="2.200" fill="#8a8a8a"/>
<ellipse cx="241.5" cy="249" rx="5.700" ry="2" fill="#9c9c9c"/>
<line x1="192.5" y1="255.0" x2="192.5" y2="218.0" stroke="#a0a0a0" stroke-width="11.5" stroke-linecap="butt"/>
<line x1="186.0" y1="215.0" x2="211.0" y2="209.0" stroke="#a6a6a6" stroke-width="13.5" stroke-linecap="butt"/>
<ellipse cx="185.5" cy="215.3" rx="5" ry="7.200" fill="#7c7c7c" stroke="#c2c2c2" stroke-width="1.200" transform="rotate(-14 185.5 215.3)"/>
<circle cx="210.5" cy="209.2" r="6.500" fill="#ababab"/>
<path d="M196.5 275L200.5 261V241H213.5V261L216.5 275Q206.5 279.5 196.5 275z" fill="#9e9e9e"/>
<ellipse cx="207" cy="241" rx="6.500" ry="2.500" fill="#8a8a8a" stroke="#b5b5b5" stroke-width="0.800"/>
<line x1="186.0" y1="258.5" x2="208.0" y2="252.0" stroke="#a3a3a3" stroke-width="13.5" stroke-linecap="butt"/>
<ellipse cx="185" cy="258.8" rx="5" ry="7.200" fill="#7c7c7c" stroke="#c2c2c2" stroke-width="1.200" transform="rotate(-14 185 258.8)"/>
</g>
</svg>
<div id="aiwin" style="position:absolute;left:0;top:0;width:2560px;height:1440px;will-change:transform">
<svg width="0" height="0" style="position:absolute"><defs>
<linearGradient id="wallg" x1="0" y1="0" x2="1" y2="0"><stop offset="0" stop-color="#9b9c95"/><stop offset="0.150" stop-color="#a9aaa2"/><stop offset="0.350" stop-color="#b6b7ae"/><stop offset="0.650" stop-color="#bebfb6"/><stop offset="1" stop-color="#c5c5bd"/></linearGradient>
<linearGradient id="wallv" x1="0" y1="0" x2="0" y2="1"><stop offset="0" stop-color="#000" stop-opacity="0.080"/><stop offset="0.500" stop-color="#fff" stop-opacity="0.050"/><stop offset="1" stop-color="#fff" stop-opacity="0.120"/></linearGradient>
<linearGradient id="deskg" x1="0" y1="0" x2="0" y2="1"><stop offset="0" stop-color="#c4bba9"/><stop offset="0.400" stop-color="#cbc3b2"/><stop offset="1" stop-color="#d4cdbe"/></linearGradient>
<linearGradient id="deskh" x1="0" y1="0" x2="1" y2="0"><stop offset="0" stop-color="#fff" stop-opacity="0.100"/><stop offset="0.550" stop-color="#fff" stop-opacity="0"/><stop offset="1" stop-color="#5a4a30" stop-opacity="0.120"/></linearGradient>
<linearGradient id="colg" x1="0" y1="0" x2="1" y2="0"><stop offset="0" stop-color="#85858d"/><stop offset="0.300" stop-color="#b9b9c1"/><stop offset="0.550" stop-color="#d2d2da"/><stop offset="0.800" stop-color="#a9a9b1"/><stop offset="1" stop-color="#808088"/></linearGradient>
<linearGradient id="baseg" x1="0" y1="0" x2="0.200" y2="1"><stop offset="0" stop-color="#8a8b91"/><stop offset="0.550" stop-color="#96979d"/><stop offset="1" stop-color="#b9bac0"/></linearGradient>
<linearGradient id="mouseg" x1="0" y1="0" x2="1" y2="1"><stop offset="0" stop-color="#17191c"/><stop offset="0.600" stop-color="#1f2226"/><stop offset="1" stop-color="#2b2f35"/></linearGradient>
<linearGradient id="deckg" x1="0" y1="0" x2="1" y2="1"><stop offset="0" stop-color="#b4b5b5"/><stop offset="1" stop-color="#cdcdcd"/></linearGradient>
</defs></svg>
<div class="abs" style="left:1373px;top:231px;width:1134px;height:1042px;background:#f6fafd;border-radius:4px 4px 3px 3px;box-shadow:0 0 10px rgba(0,0,0,0.5)"></div>
<div class="abs" style="left:1373px;top:231px;width:1134px;height:30px;background:#fcfcfc;border-radius:4px 4px 0 0"></div>
<span class="t" style="left:1878.00px;top:238.76px;font-size:14.22px;color:#111;">AI Robotics Control</span>
<svg class="abs" style="left:2434px;top:238px" width="68" height="16" viewBox="0 0 68 16"><g fill="none" stroke="#111" stroke-width="2"><path d="M4 12h10"/><rect x="29" y="4.500" width="9" height="7.500" stroke-width="1.600"/><path d="M29 5h9" stroke-width="2.400"/><path d="M51.500 3.500l9 9M60.500 3.500l-9 9" stroke-width="2.200"/></g></svg>
<div class="abs" style="left:1386px;top:298px;width:1111px;height:953px;background:#fcfcfc;border:1px solid #b9b9b9"></div>
<div class="abs" style="left:1386px;top:271px;width:60px;height:28px;background:#fcfcfc;border:1px solid #b9b9b9;border-bottom:none;border-radius:3px 3px 0 0"></div>
<div class="abs" style="left:1446px;top:273px;width:80px;height:25px;background:#efefef;border:1px solid #c4c4c4;border-bottom:none;border-left:none;border-radius:0 3px 0 0"></div>
<span class="t" style="left:1398.25px;top:278.72px;font-size:14.81px;">Apps</span>
<span class="t" style="left:1457.50px;top:279.00px;font-size:15.36px;">Settings</span>
<span class="t" style="left:1398.25px;top:312.65px;font-size:14.60px;">Camera Stream</span>
<span class="t" style="left:1968.30px;top:312.45px;font-size:15.07px;">App Status</span>
<span class="t" style="left:1398.25px;top:642.03px;font-size:15.32px;">Depth Stream</span>
<span class="t" style="left:1967.30px;top:642.04px;font-size:15.31px;">Inference Result</span>
<span class="t" style="left:1398.20px;top:951.61px;font-size:16.05px;">Input</span>
<div class="abs" style="left:1399px;top:331px;width:559px;height:259px;border:1px solid #e3e3e3;border-radius:3px;background:#fbfbfb"></div>
<div class="abs" style="left:1969px;top:331px;width:521px;height:260px;border:1px solid #e3e3e3;border-radius:3px;background:#fbfbfb"></div>
<div class="abs" style="left:1399px;top:661px;width:559px;height:259px;border:1px solid #e3e3e3;border-radius:3px;background:#fbfbfb"></div>
<div class="abs" style="left:1968px;top:661px;width:521px;height:259px;border:1px solid #e3e3e3;border-radius:3px;background:#fbfbfb"></div>
<div class="abs" style="left:1399px;top:971px;width:930px;height:270px;border:1px solid #e3e3e3;border-radius:3px;background:#fbfbfb"></div>
<svg class="abs" style="left:1465px;top:340px" width="426" height="240" viewBox="0 0 426 240">
<rect width="426" height="240" fill="url(#wallg)"/><rect width="426" height="130" fill="url(#wallv)"/>
<path d="M0 121L426 109V240H0z" fill="url(#deskg)"/><path d="M0 121L426 109V240H0z" fill="url(#deskh)"/>
<path d="M470 120L0 231L0 241z" fill="#b9ad97" opacity="0.22"/>
<path d="M470 112L70 236L70 244z" fill="#bcb09a" opacity="0.2"/>
<path d="M470 130L200 235L200 245z" fill="#b6aa93" opacity="0.2"/>
<path d="M470 105L0 193L0 199z" fill="#e2dbcc" opacity="0.28"/>
<path d="M470 140L310 236L310 244z" fill="#bdb29c" opacity="0.2"/>
<path d="M470 100L0 165.5L0 170.5z" fill="#b8ac96" opacity="0.2"/>
<path d="M470 108L0 213.5L0 218.5z" fill="#e4ddce" opacity="0.25"/>
<path d="M470 122L130 237L130 243z" fill="#e2dbcb" opacity="0.22"/>
<path d="M470 116L20 238L20 242z" fill="#b5a992" opacity="0.2"/>
<path d="M470 126L260 237.5L260 242.5z" fill="#e0d8c8" opacity="0.2"/>
<ellipse cx="262" cy="141" rx="72" ry="4.500" fill="#6d6556" opacity="0.350"/>
<path d="M229 0H269.500V10.500L257 10L231 1.500z" fill="#1b1e1d"/>
<path d="M279.400 18H284.800V82H279.400z" fill="#a6a69e"/>
<path d="M321.800 108.300L426 102V106.500L321.800 112.800z" fill="#94948f"/>
<path d="M308 96C309 88 315 82 324 82L338 83L360 108L320 108.500z" fill="#1e2022"/>
<path d="M324.500 81.200H328.100L321.800 108.300H319.500z" fill="#8e8a80"/>
<path d="M294.700 37.900C284 50 280 64 284 75S297 90 309 94" fill="none" stroke="#1a1b1c" stroke-width="3.200"/>
<path d="M276.700 17.100L373.200 40.600L426 93.900V99.500L362 111.500L358 108z" fill="url(#deckg)"/>
<path d="M276.700 17.100L358 108L362 111.500L364.500 109.500L280.500 18z" fill="#8b8b8b"/>
<path d="M292.900 26.600L371.400 41.500L401.200 72.200L329.900 67.700z" fill="#4f5456"/>
<g stroke="#8e9294" stroke-width="0.600" opacity="0.700"><path d="M300 35L378 48.500M308 43.500L385 56M316 52L392 63.500M323 60L398 69.500"/></g>
<path d="M356.100 73.100L387.700 74.900L410.200 102L381.400 103.800z" fill="#b3b5b7"/>
<path d="M339.800 82.100L353.400 81.700L359.700 89.400L346.200 89.800z" fill="#ececf2"/>
<path d="M272 0H363L364 34.500L291 18L274.500 15.300L272 15z" fill="#2c2e33"/>
<path d="M276 0H360L360.500 30.500L292 14.500L276.500 11z" fill="#5d6069"/>
<path d="M278 0H352V12L300 4z" fill="#8b8d99" opacity="0.700"/>
<path d="M52 0H98L100.500 52L106.700 120.500H60.500L54.400 55z" fill="url(#colg)"/>
<ellipse cx="83.600" cy="120.500" rx="23.100" ry="1.800" fill="#8e8e96"/>
<path d="M0 123.300L60 121L107 120.500L186 119L189 126L50.600 142.800L0 143.800z" fill="url(#baseg)"/>
<path d="M0 143.800L50.600 142.800L189 126L191 132.500L53 155L0 149.500z" fill="#2b2728"/>
<path d="M50.600 142.800L189 126" stroke="#d6d7de" stroke-width="1.600"/>
<path d="M76.700 1.500H92.500L85 28z" fill="#a2a2ab"/><path d="M78 1.500H91L89 8H80z" fill="#c4c4cc"/>
<path d="M66.700 0L77.800 27.800L82.200 46.700" fill="none" stroke="#17191b" stroke-width="2.600"/>
<path d="M95.500 0H108L98 50.500C94 52.500 86 52 82 48.500z" fill="#191b1e"/>
<path d="M95.500 49C103 42 111 38.500 122 38.500C140 39 158 52 172 70S195 96 207 104" fill="none" stroke="#1a1c1f" stroke-width="3.200"/>
<path d="M105.500 92C130 84 155 75.500 175 72S210 73 228 95" fill="none" stroke="#1a1c1f" stroke-width="2.800"/>
<path d="M0 99C15 92 25 85 37 84.500S52 85 56 86.500" fill="none" stroke="#1a1c1f" stroke-width="4"/>
<path d="M0 115.500L59 116.500" fill="none" stroke="#1a1c1f" stroke-width="3.800"/>
<path d="M7 123L37 100L56 89.500" fill="none" stroke="#1a1c1f" stroke-width="4.600"/>
<path d="M185 123C190 132 196 139.500 212 141.500C240 143 290 140.500 315 137.500C322 135.500 326 131 327.500 126z" fill="#1b3f9c"/>
<path d="M183 120C195 108 205 100 211 96C214 93 220 92 226 93C240 88 252 84 267 83.500C285 83 300 92 315 108C322 116 328 121 329.500 124C326 130 318 132 305 133.500C275 137.500 235 137 215 133.500C200 130 188 126 183 120z" fill="url(#mouseg)"/>
<path d="M255 124C275 108 292 104 303 106C310 112 312 118 308 124C295 130 270 131 255 124z" fill="#34383e" opacity="0.800"/>
<path d="M206 112C230 100 262 92 290 90" fill="none" stroke="#0e0f11" stroke-width="1.200"/>
<rect x="211.600" y="0" width="2.200" height="240" fill="#ff0000"/><rect x="153.300" y="73.500" width="125.500" height="93" fill="none" stroke="#ff0000" stroke-width="1"/><rect x="212" y="119" width="1.500" height="1.500" fill="#00ff00"/>
</svg>
<svg class="abs" style="left:1465px;top:670px" width="426" height="240" viewBox="0 0 426 240">
<rect width="426" height="240" fill="#000080"/>
<path d="M22 0L426 0V112L380 116L352 121L330 126L292 130L272 112L255 97L225 91L195 93L165 105L140 122L100 129L58 131L40 124L26 100z" fill="#080898"/>
<path d="M118 22L150 18L200 30L240 55L262 80L268 104L255 97L225 91L195 93L170 100L150 85L120 60z" fill="#0404c2"/>
<path d="M215 0L307 0V55L285 62L255 35z" fill="#0808a8"/>
<path d="M307 0H426V104L395 107L362 103L335 78L307 55z" fill="#0000dc"/>
<path d="M248 82L258 79L268 95L267 106L256 102z" fill="#0000ee"/>
<g fill="none" stroke="#00008a" stroke-width="3"><path d="M130 5C120 40 110 80 85 125"/><path d="M110 60C150 60 190 80 215 100"/><path d="M150 25C200 30 240 60 275 110"/><path d="M115 108C140 100 160 92 180 92"/></g>
<rect x="11" y="1" width="3" height="2" fill="#3ad6c0"/>
<rect x="247" y="2" width="5" height="5" fill="#5de89a"/>
<rect x="78" y="22" width="2" height="2" fill="#a01008"/>
<rect x="131" y="130" width="5" height="3" fill="#d9e021"/>
<rect x="137" y="133" width="3" height="3" fill="#d9e021"/>
<rect x="95" y="130" width="1" height="2" fill="#e0601a"/>
<rect x="68" y="156" width="3" height="3" fill="#22c8f0"/>
<rect x="85" y="160" width="4" height="3" fill="#3ae0e0"/>
<rect x="92" y="157" width="4" height="4" fill="#1040ff"/>
<rect x="166" y="158" width="2" height="2" fill="#22e0e0"/>
<rect x="183" y="156" width="2" height="3" fill="#22e0e0"/>
<rect x="222" y="143" width="4" height="3" fill="#8b0a0a"/>
<rect x="215" y="154" width="5" height="2" fill="#8b0a0a"/>
<rect x="196" y="175" width="5" height="4" fill="#8b0a0a"/>
<rect x="220" y="187" width="3" height="3" fill="#8b0a0a"/>
<rect x="64" y="177" width="7" height="3" fill="#8b0a0a"/>
<rect x="71" y="176" width="2" height="2" fill="#e0401a"/>
<rect x="313" y="132" width="3" height="3" fill="#e0401a"/>
<rect x="313" y="149" width="3" height="3" fill="#22e0e0"/>
<rect x="388" y="134" width="8" height="11" fill="#19d3ea"/>
<rect x="359" y="117" width="4" height="2" fill="#8b0a0a"/>
<rect x="398" y="122" width="6" height="2" fill="#8b0a0a"/>
<rect x="412" y="127" width="14" height="6" fill="#8b0a0a"/>
<rect x="405" y="120" width="5" height="3" fill="#8b0a0a"/>
<rect x="424" y="146" width="2" height="4" fill="#8b0a0a"/>
<rect x="324" y="168" width="6" height="4" fill="#8b0a0a"/>
<rect x="140" y="189" width="2" height="3" fill="#e0401a"/>
<rect x="138" y="198" width="6" height="4" fill="#19a0ea"/>
<rect x="148" y="211" width="3" height="2" fill="#a0e860"/>
<rect x="228" y="198" width="3" height="3" fill="#a0e860"/>
<rect x="260" y="191" width="2" height="3" fill="#c0e020"/>
<rect x="323" y="206" width="2" height="2" fill="#40e0c0"/>
<rect x="15" y="213" width="3" height="3" fill="#c0e040"/>
<rect x="83" y="209" width="3" height="2" fill="#22c8f0"/>
<rect x="66" y="208" width="3" height="3" fill="#1a50ff"/>
<rect x="84" y="184" width="3" height="3" fill="#1a50ff"/>
<rect x="103" y="181" width="2" height="3" fill="#22a0f0"/>
<rect x="80" y="175" width="5" height="3" fill="#1a40ff"/>
<rect x="88" y="178" width="5" height="3" fill="#1a40ff"/>
<rect x="62" y="204" width="4" height="3" fill="#1a40ff"/>
<rect x="166" y="186" width="3" height="3" fill="#1a60ff"/>
<rect x="92" y="184" width="3" height="3" fill="#1a40ff"/>
<rect x="228" y="169" width="3" height="2" fill="#1a40ff"/>
<rect x="268" y="160" width="3" height="2" fill="#1a50ff"/>
<rect x="264" y="176" width="3" height="2" fill="#1a50ff"/>
<rect x="19" y="35" width="6" height="5" fill="#1010c0"/>
<rect x="22" y="55" width="5" height="8" fill="#1010c0"/>
<rect x="20" y="75" width="4" height="6" fill="#1010c0"/>
<rect x="20" y="95" width="4" height="4" fill="#1010c0"/>
<rect x="58" y="133" width="8" height="3" fill="#1010d0"/>
<rect x="186" y="150" width="6" height="4" fill="#1010d0"/>
<rect x="140" y="151" width="5" height="3" fill="#1010c0"/>
<rect x="205" y="137" width="5" height="2" fill="#0808a0" opacity="0.8"/>
<rect x="77" y="186" width="2" height="3" fill="#0808a0" opacity="0.8"/>
<rect x="338" y="125" width="3" height="2" fill="#0808a0" opacity="0.8"/>
<rect x="84" y="173" width="5" height="2" fill="#0808a0" opacity="0.8"/>
<rect x="163" y="129" width="5" height="2" fill="#0808a0" opacity="0.8"/>
<rect x="329" y="133" width="3" height="2" fill="#0808a0" opacity="0.8"/>
<rect x="335" y="192" width="5" height="2" fill="#0808a0" opacity="0.8"/>
<rect x="153" y="123" width="3" height="3" fill="#0808a0" opacity="0.8"/>
<rect x="254" y="136" width="2" height="3" fill="#0808a0" opacity="0.8"/>
<rect x="326" y="205" width="3" height="2" fill="#0808a0" opacity="0.8"/>
<rect x="337" y="191" width="3" height="3" fill="#0808a0" opacity="0.8"/>
<rect x="89" y="188" width="2" height="2" fill="#0808a0" opacity="0.8"/>
<rect x="356" y="144" width="5" height="3" fill="#0808a0" opacity="0.8"/>
<rect x="200" y="177" width="5" height="3" fill="#0808a0" opacity="0.8"/>
<rect x="193" y="149" width="3" height="2" fill="#0808a0" opacity="0.8"/>
<rect x="81" y="191" width="4" height="3" fill="#0808a0" opacity="0.8"/>
<rect x="215" y="211" width="5" height="3" fill="#0808a0" opacity="0.8"/>
<rect x="351" y="127" width="2" height="3" fill="#0808a0" opacity="0.8"/>
<rect x="124" y="214" width="4" height="2" fill="#0808a0" opacity="0.8"/>
<rect x="290" y="171" width="2" height="2" fill="#0808a0" opacity="0.8"/>
<rect x="325" y="191" width="4" height="3" fill="#0808a0" opacity="0.8"/>
<rect x="395" y="162" width="5" height="3" fill="#0808a0" opacity="0.8"/>
<rect x="75" y="129" width="4" height="3" fill="#0808a0" opacity="0.8"/>
<rect x="396" y="203" width="2" height="2" fill="#0808a0" opacity="0.8"/>
<rect x="414" y="207" width="4" height="3" fill="#0808a0" opacity="0.8"/>
<rect x="185" y="209" width="5" height="3" fill="#0808a0" opacity="0.8"/>
<rect x="51" y="177" width="4" height="2" fill="#0808a0" opacity="0.8"/>
<rect x="352" y="132" width="5" height="2" fill="#0808a0" opacity="0.8"/>
<rect x="151" y="154" width="3" height="2" fill="#0808a0" opacity="0.8"/>
<rect x="243" y="168" width="5" height="2" fill="#0808a0" opacity="0.8"/>
<rect x="125" y="175" width="5" height="3" fill="#0808a0" opacity="0.8"/>
<rect x="110" y="173" width="4" height="3" fill="#0808a0" opacity="0.8"/>
<rect x="223" y="205" width="5" height="2" fill="#0808a0" opacity="0.8"/>
<rect x="117" y="128" width="3" height="2" fill="#0808a0" opacity="0.8"/>
<rect x="158" y="202" width="3" height="2" fill="#0808a0" opacity="0.8"/>
<rect x="288" y="193" width="3" height="3" fill="#0808a0" opacity="0.8"/>
<rect x="184" y="118" width="3" height="3" fill="#0808a0" opacity="0.8"/>
<rect x="313" y="165" width="4" height="2" fill="#0808a0" opacity="0.8"/>
<rect x="393" y="183" width="2" height="3" fill="#0808a0" opacity="0.8"/>
<rect x="388" y="189" width="5" height="3" fill="#0808a0" opacity="0.8"/>
<rect x="244" y="168" width="2" height="3" fill="#0808a0" opacity="0.8"/>
<rect x="364" y="169" width="2" height="2" fill="#0808a0" opacity="0.8"/>
<rect x="74" y="144" width="5" height="2" fill="#0808a0" opacity="0.8"/>
<rect x="96" y="161" width="2" height="2" fill="#0808a0" opacity="0.8"/>
<rect x="40" y="190" width="3" height="2" fill="#0808a0" opacity="0.8"/>
<rect x="226" y="196" width="2" height="2" fill="#0808a0" opacity="0.8"/>
<rect x="146" y="196" width="5" height="2" fill="#0808a0" opacity="0.8"/>
<rect x="364" y="150" width="4" height="3" fill="#0808a0" opacity="0.8"/>
<rect x="282" y="133" width="2" height="3" fill="#0808a0" opacity="0.8"/>
<rect x="278" y="179" width="5" height="3" fill="#0808a0" opacity="0.8"/>
<rect x="83" y="136" width="2" height="3" fill="#0808a0" opacity="0.8"/>
<rect x="419" y="151" width="5" height="2" fill="#0808a0" opacity="0.8"/>
<rect x="304" y="120" width="3" height="3" fill="#0808a0" opacity="0.8"/>
<rect x="115" y="206" width="2" height="3" fill="#0808a0" opacity="0.8"/>
<rect x="369" y="129" width="4" height="3" fill="#0808a0" opacity="0.8"/>
<rect x="125" y="163" width="3" height="3" fill="#0808a0" opacity="0.8"/>
<rect x="365" y="146" width="3" height="2" fill="#0808a0" opacity="0.8"/>
<rect x="245" y="212" width="3" height="2" fill="#0808a0" opacity="0.8"/>
<rect x="305" y="181" width="4" height="2" fill="#0808a0" opacity="0.8"/>
<rect x="54" y="153" width="5" height="3" fill="#0808a0" opacity="0.8"/>
<rect x="139" y="206" width="4" height="3" fill="#0808a0" opacity="0.8"/>
<rect x="410" y="162" width="4" height="2" fill="#0808a0" opacity="0.8"/>
<rect x="152" y="131" width="3" height="3" fill="#0808a0" opacity="0.8"/>
<rect x="140" y="161" width="3" height="3" fill="#0808a0" opacity="0.8"/>
<rect x="359" y="196" width="2" height="3" fill="#0808a0" opacity="0.8"/>
<rect x="374" y="162" width="2" height="2" fill="#0808a0" opacity="0.8"/>
<rect x="238" y="209" width="3" height="3" fill="#0808a0" opacity="0.8"/>
<rect x="131" y="173" width="4" height="2" fill="#0808a0" opacity="0.8"/>
<rect x="409" y="168" width="5" height="3" fill="#0808a0" opacity="0.8"/>
<rect x="420" y="128" width="3" height="2" fill="#0808a0" opacity="0.8"/>
</svg>
<svg class="abs" style="left:2013px;top:670px" width="426" height="240" viewBox="0 0 426 240">
<rect width="426" height="240" fill="url(#wallg)"/><rect width="426" height="130" fill="url(#wallv)"/>
<path d="M0 121L426 109V240H0z" fill="url(#deskg)"/><path d="M0 121L426 109V240H0z" fill="url(#deskh)"/>
<path d="M470 120L0 231L0 241z" fill="#b9ad97" opacity="0.22"/>
<path d="M470 112L70 236L70 244z" fill="#bcb09a" opacity="0.2"/>
<path d="M470 130L200 235L200 245z" fill="#b6aa93" opacity="0.2"/>
<path d="M470 105L0 193L0 199z" fill="#e2dbcc" opacity="0.28"/>
<path d="M470 140L310 236L310 244z" fill="#bdb29c" opacity="0.2"/>
<path d="M470 100L0 165.5L0 170.5z" fill="#b8ac96" opacity="0.2"/>
<path d="M470 108L0 213.5L0 218.5z" fill="#e4ddce" opacity="0.25"/>
<path d="M470 122L130 237L130 243z" fill="#e2dbcb" opacity="0.22"/>
<path d="M470 116L20 238L20 242z" fill="#b5a992" opacity="0.2"/>
<path d="M470 126L260 237.5L260 242.5z" fill="#e0d8c8" opacity="0.2"/>
<ellipse cx="262" cy="141" rx="72" ry="4.500" fill="#6d6556" opacity="0.350"/>
<path d="M229 0H269.500V10.500L257 10L231 1.500z" fill="#1b1e1d"/>
<path d="M279.400 18H284.800V82H279.400z" fill="#a6a69e"/>
<path d="M321.800 108.300L426 102V106.500L321.800 112.800z" fill="#94948f"/>
<path d="M308 96C309 88 315 82 324 82L338 83L360 108L320 108.500z" fill="#1e2022"/>
<path d="M324.500 81.200H328.100L321.800 108.300H319.500z" fill="#8e8a80"/>
<path d="M294.700 37.900C284 50 280 64 284 75S297 90 309 94" fill="none" stroke="#1a1b1c" stroke-width="3.200"/>
<path d="M276.700 17.100L373.200 40.600L426 93.900V99.500L362 111.500L358 108z" fill="url(#deckg)"/>
<path d="M276.700 17.100L358 108L362 111.500L364.500 109.500L280.500 18z" fill="#8b8b8b"/>
<path d="M292.900 26.600L371.400 41.500L401.200 72.200L329.900 67.700z" fill="#4f5456"/>
<g stroke="#8e9294" stroke-width="0.600" opacity="0.700"><path d="M300 35L378 48.500M308 43.500L385 56M316 52L392 63.500M323 60L398 69.500"/></g>
<path d="M356.100 73.100L387.700 74.900L410.200 102L381.400 103.800z" fill="#b3b5b7"/>
<path d="M339.800 82.100L353.400 81.700L359.700 89.400L346.200 89.800z" fill="#ececf2"/>
<path d="M272 0H363L364 34.500L291 18L274.500 15.300L272 15z" fill="#2c2e33"/>
<path d="M276 0H360L360.500 30.500L292 14.500L276.500 11z" fill="#5d6069"/>
<path d="M278 0H352V12L300 4z" fill="#8b8d99" opacity="0.700"/>
<path d="M52 0H98L100.500 52L106.700 120.500H60.500L54.400 55z" fill="url(#colg)"/>
<ellipse cx="83.600" cy="120.500" rx="23.100" ry="1.800" fill="#8e8e96"/>
<path d="M0 123.300L60 121L107 120.500L186 119L189 126L50.600 142.800L0 143.800z" fill="url(#baseg)"/>
<path d="M0 143.800L50.600 142.800L189 126L191 132.500L53 155L0 149.500z" fill="#2b2728"/>
<path d="M50.600 142.800L189 126" stroke="#d6d7de" stroke-width="1.600"/>
<path d="M76.700 1.500H92.500L85 28z" fill="#a2a2ab"/><path d="M78 1.500H91L89 8H80z" fill="#c4c4cc"/>
<path d="M66.700 0L77.800 27.800L82.200 46.700" fill="none" stroke="#17191b" stroke-width="2.600"/>
<path d="M95.500 0H108L98 50.500C94 52.500 86 52 82 48.500z" fill="#191b1e"/>
<path d="M95.500 49C103 42 111 38.500 122 38.500C140 39 158 52 172 70S195 96 207 104" fill="none" stroke="#1a1c1f" stroke-width="3.200"/>
<path d="M105.500 92C130 84 155 75.500 175 72S210 73 228 95" fill="none" stroke="#1a1c1f" stroke-width="2.800"/>
<path d="M0 99C15 92 25 85 37 84.500S52 85 56 86.500" fill="none" stroke="#1a1c1f" stroke-width="4"/>
<path d="M0 115.500L59 116.500" fill="none" stroke="#1a1c1f" stroke-width="3.800"/>
<path d="M7 123L37 100L56 89.500" fill="none" stroke="#1a1c1f" stroke-width="4.600"/>
<path d="M185 123C190 132 196 139.500 212 141.500C240 143 290 140.500 315 137.500C322 135.500 326 131 327.500 126z" fill="#1b3f9c"/>
<path d="M183 120C195 108 205 100 211 96C214 93 220 92 226 93C240 88 252 84 267 83.500C285 83 300 92 315 108C322 116 328 121 329.500 124C326 130 318 132 305 133.500C275 137.500 235 137 215 133.500C200 130 188 126 183 120z" fill="url(#mouseg)"/>
<path d="M255 124C275 108 292 104 303 106C310 112 312 118 308 124C295 130 270 131 255 124z" fill="#34383e" opacity="0.800"/>
<path d="M206 112C230 100 262 92 290 90" fill="none" stroke="#0e0f11" stroke-width="1.200"/>
<rect x="183" y="83.500" width="147" height="59" fill="none" stroke="#ff0000" stroke-width="1.800"/>
</svg>
<div class="abs" style="left:1969px;top:368px;width:519px;text-align:center;font-family:'Liberation Serif',serif;font-size:13px;line-height:17px;color:#008000;white-space:pre">set_obj_info('{"Obj": {"Name": "The black computer mouse", "centerX": 0.13547368419,
"centerY": -0.023968421049, "centerZ": 0.9517, "score": 81.0718994140625}, "Dest":
{"Name": "The target position"}}')

prepare_state()
target_pose = get_pick_pose('The black computer mouse')
move(target_pose)
suck()
target_pose = get_place_pose('The target position')
move(target_pose)
release()
prepare_state()</div>
<span class="t" style="left:1408.70px;top:1013.94px;font-size:31.50px;transform:scaleX(1.0878);transform-origin:0 0;">Text prompt</span>
<div class="abs" style="left:1408px;top:1053px;width:911px;height:50px;border:1px solid #b4b4b4;border-radius:3px;background:#fafafa"></div>
<span class="t" style="left:1411.60px;top:1071.45px;font-size:15.29px;">Please pick up the black computer mouse and place it in the target position</span>
<div class="abs" style="left:1408px;top:1141px;width:450px;height:90px;border:1px solid #ef7245;border-radius:3px;background:#fcfcfc"></div>
<div class="abs" style="left:1864px;top:1141px;width:455px;height:90px;border:1px solid #bdbdbd;border-radius:3px;background:#fcfcfc"></div>
<span class="t" style="left:1608.75px;top:1178.92px;font-size:15.46px;">Submit</span>
<svg class="abs" style="left:2041.500px;top:1179px" width="13" height="16" viewBox="0 0 13 16"><rect x="4" y="0.500" width="5" height="9" rx="2.500" fill="#111"/><path d="M1.800 6.500a4.700 4.700 0 0 0 9.400 0M6.500 11.500v3M4 14.800h5" fill="none" stroke="#111" stroke-width="1.300"/><path d="M4 3.500h5M4 5.500h5" stroke="#fff" stroke-width="0.700"/></svg>
<span class="t" style="left:2058.50px;top:1179.46px;font-size:15.41px;">Microphone</span>
<svg class="abs" style="left:2397px;top:1159px" width="81" height="81" viewBox="0 0 81 81">
<defs><radialGradient id="ilg" cx="0" cy="0" r="1.100"><stop offset="0" stop-color="#4a48d8"/><stop offset="0.300" stop-color="#1c22a0"/><stop offset="0.700" stop-color="#0b1668"/><stop offset="1" stop-color="#0a1570"/></radialGradient></defs>
<rect width="81" height="81" fill="url(#ilg)"/><rect x="0.500" y="0.500" width="80" height="80" fill="none" stroke="#0a1a90" stroke-width="1"/>
<rect x="8.500" y="9" width="4" height="4" fill="#7fd0ff"/>
<text x="8" y="27" font-family="Liberation Sans,sans-serif" font-weight="bold" font-size="24" fill="#fff" textLength="46" lengthAdjust="spacingAndGlyphs">intel</text>
<text x="8" y="43.500" font-family="Liberation Sans,sans-serif" font-size="17.500" fill="#fff" textLength="53" lengthAdjust="spacingAndGlyphs">CORE</text>
<text x="8.500" y="73.500" font-family="Liberation Sans,sans-serif" font-weight="bold" font-size="9.500" fill="#fff" textLength="35" lengthAdjust="spacingAndGlyphs">ULTRA</text>
<rect x="70.1" y="10.3" width="3" height="3" fill="#4f8dff" opacity="0.35"/>
<rect x="62.5" y="17.9" width="3" height="3" fill="#4f8dff" opacity="0.3"/>
<rect x="70.1" y="17.9" width="3" height="3" fill="#4f8dff" opacity="0.6"/>
<rect x="54.7" y="25.4" width="3" height="3" fill="#4f8dff" opacity="0.25"/>
<rect x="62.5" y="25.4" width="3" height="3" fill="#4f8dff" opacity="0.5"/>
<rect x="70.1" y="25.4" width="3" height="3" fill="#4f8dff" opacity="0.7"/>
<rect x="62.5" y="33.1" width="3" height="3" fill="#4f8dff" opacity="0.6"/>
<rect x="70.1" y="33.1" width="3" height="3" fill="#4f8dff" opacity="0.8"/>
<rect x="62.5" y="40.7" width="3" height="3" fill="#4f8dff" opacity="0.7"/>
<rect x="70.1" y="40.7" width="3" height="3" fill="#cfeaff" opacity="0.95"/>
<rect x="31.8" y="48.3" width="3" height="3" fill="#4f8dff" opacity="0.2"/>
<rect x="39.6" y="48.3" width="3" height="3" fill="#4f8dff" opacity="0.4"/>
<rect x="47.2" y="48.3" width="3" height="3" fill="#4f8dff" opacity="0.55"/>
<rect x="54.7" y="48.3" width="3" height="3" fill="#4f8dff" opacity="0.7"/>
<rect x="62.5" y="48.3" width="3" height="3" fill="#cfeaff" opacity="0.9"/>
<rect x="70.1" y="48.3" width="3" height="3" fill="#cfeaff" opacity="1"/>
<rect x="24.5" y="55.8" width="3" height="3" fill="#4f8dff" opacity="0.15"/>
<rect x="31.8" y="55.8" width="3" height="3" fill="#4f8dff" opacity="0.35"/>
<rect x="39.6" y="55.8" width="3" height="3" fill="#4f8dff" opacity="0.5"/>
<rect x="47.2" y="55.8" width="3" height="3" fill="#4f8dff" opacity="0.65"/>
<rect x="54.7" y="55.8" width="3" height="3" fill="#cfeaff" opacity="0.85"/>
<rect x="62.5" y="55.8" width="3" height="3" fill="#cfeaff" opacity="1"/>
<rect x="70.1" y="55.8" width="3" height="3" fill="#cfeaff" opacity="1"/>
<rect x="47.2" y="63.4" width="3" height="3" fill="#cfeaff" opacity="0.9"/>
<rect x="54.7" y="63.4" width="3" height="3" fill="#cfeaff" opacity="1"/>
<rect x="62.5" y="63.4" width="3" height="3" fill="#cfeaff" opacity="1"/>
<rect x="70.1" y="63.4" width="3" height="3" fill="#cfeaff" opacity="1"/>
<rect x="47.2" y="71.1" width="3" height="3" fill="#cfeaff" opacity="1"/>
<rect x="54.7" y="71.1" width="3" height="3" fill="#cfeaff" opacity="1"/>
<rect x="62.5" y="71.1" width="3" height="3" fill="#cfeaff" opacity="1"/>
<rect x="70.1" y="71.1" width="3" height="3" fill="#cfeaff" opacity="1"/>
</svg>
</div>
<div id="topbar">
<span class="t" style="left:18.50px;top:5.70px;font-size:15.71px;">Activities</span>
<svg class="abs" style="left:116px;top:4px" width="19" height="19" viewBox="0 0 19 19"><g stroke="#f4f4f4" stroke-width="1.800" fill="none" stroke-linecap="round"><path d="M8 2C8.300 5 7.800 8 7 10.500S5.800 14.500 5.500 17"/><path d="M1.500 8.200C4 8.800 6 9.600 8 10.200S13 10.500 16.500 9.800"/><path d="M16.500 8.200v3.200M1.500 6.800v2.600M4 16.800h3"/></g></svg>
<span class="t" style="left:139.50px;top:6.27px;font-size:15.04px;">python3</span>
<span class="t" style="left:1273.75px;top:8.89px;font-size:14.60px;letter-spacing:-0.3px;">1月</span>
<span class="t" style="left:1299.70px;top:9.60px;font-size:13.76px;">10</span>
<span class="t" style="left:1322.80px;top:9.82px;font-size:13.51px;">10:31</span>
<svg class="abs" style="left:2440px;top:0px" width="112" height="27" viewBox="0 0 112 27">
<g fill="none" stroke="#8c8c8c" stroke-width="1.300"><rect x="3.600" y="16.600" width="4.300" height="3.800"/><rect x="14.600" y="16.600" width="4.300" height="3.800"/><path d="M5.700 16.500v-2.800h4M16.700 16.500v-2.800h-2.500M9 13.700c1.500-2 1-4 0.500-6" /></g>
<text x="7.800" y="20.800" font-family="Liberation Sans,sans-serif" font-weight="bold" font-size="16.500" fill="#f0f0f0">?</text>
<g fill="#f0f0f0"><path d="M31.800 10.300h3.200l4.300-4.300v14l-4.300-4.300h-3.200z"/></g>
<g fill="none" stroke="#f0f0f0" stroke-width="1.300" stroke-linecap="round"><path d="M41.500 10.200a4 4 0 0 1 0 5.600M43.500 7.800a7.500 7.500 0 0 1 0 10.400"/></g>
<g fill="#f0f0f0"><rect x="60.700" y="5" width="5.400" height="11" rx="2.700"/></g>
<g fill="none" stroke="#f0f0f0" stroke-width="1.200" stroke-linecap="round"><path d="M58.900 12.500a4.500 4.500 0 0 0 9 0M63.400 17.200v3M61.300 20.400h4.300M72.300 10.800a3.500 3.500 0 0 0 0 4.800M70.700 8.500a7 7 0 0 0 0 9.400" /></g>
<g fill="none" stroke="#f0f0f0" stroke-width="1.300" stroke-linecap="round"><path d="M90.700 7.700a6.200 6.200 0 1 0 7.800 0M94.600 6v7"/></g>
</svg>
</div>
<div id="dock">
<svg class="abs" style="left:13.500px;top:14.5px" width="43" height="45" viewBox="0 0 48 50">
<defs><radialGradient id="ffg" cx="0.72" cy="0.12" r="1.050"><stop offset="0" stop-color="#fff36b"/><stop offset="0.300" stop-color="#ffb02a"/><stop offset="0.620" stop-color="#ff5a36"/><stop offset="1" stop-color="#e31587"/></radialGradient>
<radialGradient id="ffp" cx="0.45" cy="0.35" r="0.700"><stop offset="0" stop-color="#a66bff"/><stop offset="1" stop-color="#5b2bd6"/></radialGradient></defs>
<path d="M26 8c3-2 5-5 6-8 4 4 7 8 9 12 1-2 1-4 0-6 5 5 7 12 6 20-1 13-10 23-23 23S1 40 1 28c0-7 2-12 6-16 0 2 0 4 1 5 1-3 3-6 6-7 0 2 0 3 1 4 3-3 7-5 11-6z" fill="url(#ffg)"/>
<circle cx="24" cy="29" r="11" fill="url(#ffp)"/>
<path d="M7 24c4-5 10-6 15-3 2 1 4 2 7 2-2 2-5 2-7 4-3 4 0 8 5 9 5 0 9-3 10-8 2 9-4 18-14 18S5 39 5 31c0-3 1-5 2-7z" fill="#ff8a1c" opacity="0.920"/>
<path d="M8 22c3-3 7-4 10-3-4 0-6 2-8 4z" fill="#ffd23a"/>
</svg>
<svg class="abs" style="left:12.800px;top:86px" width="44.500" height="40.200" viewBox="0 0 48 44" preserveAspectRatio="none">
<defs><linearGradient id="flt" x1="0" x2="1"><stop offset="0" stop-color="#7a2c4d"/><stop offset="1" stop-color="#d9552b"/></linearGradient>
<linearGradient id="flb" x1="0" y1="0" x2="0" y2="1"><stop offset="0" stop-color="#9b9b9b"/><stop offset="1" stop-color="#c4c4c4"/></linearGradient></defs>
<path d="M0 5a4 4 0 0 1 4-4h14l4 4h22a4 4 0 0 1 4 4v10H0z" fill="url(#flt)"/>
<rect x="0" y="9" width="48" height="35" rx="4.500" fill="url(#flb)"/>
<rect x="0.500" y="9.500" width="47" height="34" rx="4" fill="none" stroke="#d6d6d6" stroke-width="1" opacity="0.700"/>
<rect x="18" y="18" width="13" height="3.400" rx="1.700" fill="#fff"/>
</svg>
<svg class="abs" style="left:12.400px;top:153px" width="45.200" height="39.500" viewBox="0 0 48 42" preserveAspectRatio="none">
<defs><linearGradient id="trm" x1="0" y1="0" x2="0" y2="1"><stop offset="0" stop-color="#e02428"/><stop offset="0.450" stop-color="#b01216"/><stop offset="0.500" stop-color="#8a0a0e"/><stop offset="1" stop-color="#6e0508"/></linearGradient></defs>
<rect x="0.800" y="0.800" width="46.400" height="40.400" rx="4.500" fill="#9d9d98" stroke="#deded9" stroke-width="1.600"/>
<rect x="4.500" y="4.500" width="39" height="31" fill="#3a0204"/>
<rect x="6" y="6" width="17.300" height="13.500" fill="url(#trm)"/><rect x="24.700" y="6" width="17.300" height="13.500" fill="url(#trm)"/>
<rect x="6" y="21" width="17.300" height="13" fill="url(#trm)"/><rect x="24.700" y="21" width="17.300" height="13" fill="url(#trm)"/>
<g stroke="#fff" stroke-width="1.100" fill="none"><path d="M8 9l3 1.500-3 1.500M12 13.500h4M27 9l3 1.500-3 1.500M31 13.500h4M8 24l3 1.500-3 1.500M12 28.500h4M27 24l3 1.500-3 1.500M31 28.500h4"/></g>
<circle cx="33.500" cy="38.200" r="1.300" fill="#ff2a2a"/><rect x="37" y="37" width="4" height="2.400" fill="#7d7d78"/>
</svg>
<div class="abs" style="left:11px;top:209px;width:48px;height:1px;background:#aaa5a8"></div>
<svg class="abs" style="left:10px;top:227px" width="52" height="36" viewBox="0 0 52 36"><g transform="rotate(-7 26 18)" font-family="Liberation Sans,sans-serif" font-weight="bold" fill="#fff"><text x="3" y="30" font-size="30" textLength="30" lengthAdjust="spacingAndGlyphs">RV</text><text x="32.500" y="24" font-size="19" textLength="14.500" lengthAdjust="spacingAndGlyphs">iz</text></g></svg>
<div class="abs" style="left:3px;top:281px;width:64px;height:64px;border-radius:10px;background:#3c3237"></div>
<svg class="abs" style="left:12.800px;top:290.5px" width="44.500" height="44.500" viewBox="0 0 44.500 44.500">
<defs><linearGradient id="stg" x1="0" y1="0" x2="1" y2="1"><stop offset="0" stop-color="#b0b0b0"/><stop offset="0.500" stop-color="#8c8c8c"/><stop offset="1" stop-color="#7a7a7a"/></linearGradient></defs>
<rect x="0.600" y="0.600" width="43.300" height="43.300" rx="5" fill="url(#stg)" stroke="#c9c9c9" stroke-width="1.200"/>
<g transform="translate(22.250 22.300)"><g fill="#f4f2ee"><rect x="-2.600" y="-15.300" width="5.200" height="7" rx="0.800" transform="rotate(0)"/><rect x="-2.600" y="-15.300" width="5.200" height="7" rx="0.800" transform="rotate(30)"/><rect x="-2.600" y="-15.300" width="5.200" height="7" rx="0.800" transform="rotate(60)"/><rect x="-2.600" y="-15.300" width="5.200" height="7" rx="0.800" transform="rotate(90)"/><rect x="-2.600" y="-15.300" width="5.200" height="7" rx="0.800" transform="rotate(120)"/><rect x="-2.600" y="-15.300" width="5.200" height="7" rx="0.800" transform="rotate(150)"/><rect x="-2.600" y="-15.300" width="5.200" height="7" rx="0.800" transform="rotate(180)"/><rect x="-2.600" y="-15.300" width="5.200" height="7" rx="0.800" transform="rotate(210)"/><rect x="-2.600" y="-15.300" width="5.200" height="7" rx="0.800" transform="rotate(240)"/><rect x="-2.600" y="-15.300" width="5.200" height="7" rx="0.800" transform="rotate(270)"/><rect x="-2.600" y="-15.300" width="5.200" height="7" rx="0.800" transform="rotate(300)"/><rect x="-2.600" y="-15.300" width="5.200" height="7" rx="0.800" transform="rotate(330)"/><circle r="12.300"/></g><circle r="8.800" fill="#8e8e8e"/></g>
</svg>
<svg class="abs" style="left:16.800px;top:358.8px" width="36.400" height="44.300" viewBox="0 0 36.400 44.300">
<defs><linearGradient id="trg" x1="0" y1="0" x2="0" y2="1"><stop offset="0" stop-color="#b9b9b9"/><stop offset="1" stop-color="#e2e2e2"/></linearGradient></defs>
<rect x="0.500" y="0.500" width="35.400" height="43.300" rx="4.500" fill="url(#trg)" stroke="#e8e8e8"/>
<rect x="3.300" y="3.200" width="29.800" height="5.800" rx="2.600" fill="#858585"/>
<g transform="translate(18.200 28.300)" fill="none" stroke="#2a8a1e" stroke-width="3.600">
<path d="M-3.500 -6.500L0 -8.500L3.500 -6.500L6 -2" /><path d="M7.500 2.500L5 7H-1"/><path d="M-5 7L-7.800 2.500L-5.500 -2"/>
</g>
<g transform="translate(18.200 28.300)" fill="#2a8a1e"><path d="M3.500 -3.500L9 -3L6.500 2z"/><path d="M0 3.500L0 10.500L-4.500 7z"/><path d="M-9.500 -2.500L-3.500 -4L-5 1.500z"/></g>
</svg>
<div class="abs" style="left:2.800px;top:171px;width:6.200px;height:6.200px;border-radius:3.100px;background:#e95420"></div>
<div class="abs" style="left:2.800px;top:242px;width:6.200px;height:6.200px;border-radius:3.100px;background:#e95420"></div>
<div class="abs" style="left:2.800px;top:309.8px;width:6.200px;height:6.200px;border-radius:3.100px;background:#e95420"></div>
<div class="abs" style="left:20.0px;top:1360.0px;width:6px;height:6px;border-radius:1.500px;background:#fff"></div>
<div class="abs" style="left:32.5px;top:1360.0px;width:6px;height:6px;border-radius:1.500px;background:#fff"></div>
<div class="abs" style="left:45.0px;top:1360.0px;width:6px;height:6px;border-radius:1.500px;background:#fff"></div>
<div class="abs" style="left:20.0px;top:1372.5px;width:6px;height:6px;border-radius:1.500px;background:#fff"></div>
<div class="abs" style="left:32.5px;top:1372.5px;width:6px;height:6px;border-radius:1.500px;background:#fff"></div>
<div class="abs" style="left:45.0px;top:1372.5px;width:6px;height:6px;border-radius:1.500px;background:#fff"></div>
<div class="abs" style="left:20.0px;top:1385.0px;width:6px;height:6px;border-radius:1.500px;background:#fff"></div>
<div class="abs" style="left:32.5px;top:1385.0px;width:6px;height:6px;border-radius:1.500px;background:#fff"></div>
<div class="abs" style="left:45.0px;top:1385.0px;width:6px;height:6px;border-radius:1.500px;background:#fff"></div>
</div>
</body></html>
